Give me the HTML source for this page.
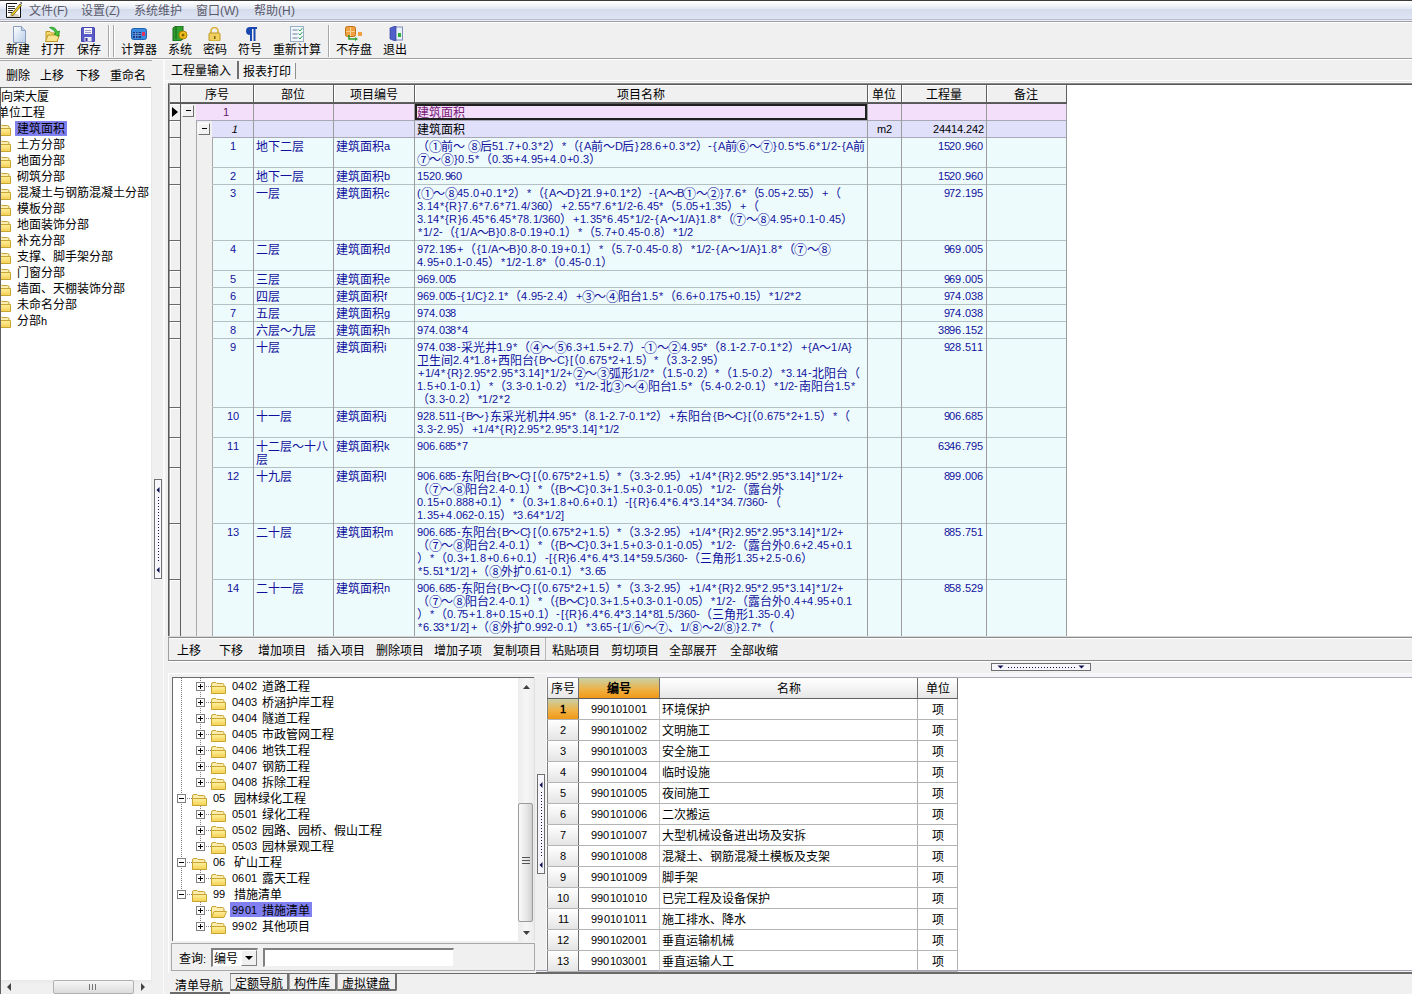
<!DOCTYPE html>
<html lang="zh-CN"><head><meta charset="utf-8">
<style>
@font-face{font-family:"Liberation Sans";src:local("Liberation Sans"),local("LiberationSans");size-adjust:91.67%;unicode-range:U+0000-024F}
*{box-sizing:border-box}
html,body{margin:0;padding:0}
body{width:1412px;height:994px;overflow:hidden;position:relative;background:#f0f0f0;font-family:"Liberation Sans",sans-serif;font-size:12px;color:#000;line-height:13px}
.a{position:absolute}
.l{position:relative;top:-1px}
.nw{white-space:nowrap}
.b{color:#10109c}
</style></head><body>

<div class="a" style="left:0px;top:0px;width:1412px;height:1px;background:#3c3c3c"></div>
<div class="a" style="left:0px;top:1px;width:1412px;height:2px;background:#ffffff"></div>
<div class="a" style="left:0px;top:3px;width:1412px;height:6px;background:linear-gradient(#fafbfd,#e4eaf4)"></div>
<div class="a" style="left:0px;top:9px;width:1412px;height:10px;background:linear-gradient(#d4dcec,#dee4f4)"></div>
<div class="a" style="left:0px;top:19px;width:1412px;height:1px;background:#b8bccc"></div>
<div class="a" style="left:0px;top:20px;width:1412px;height:1px;background:#eceef4"></div>
<div class="a" style="left:0px;top:21px;width:1412px;height:1px;background:#9c9ca4"></div>
<div class="a" style="left:0px;top:22px;width:1412px;height:1px;background:#ffffff"></div>
<svg class="a" style="left:6px;top:2px" width="16" height="16" viewBox="0 0 16 16">
<path d="M0.5 1.5V15.5H14.5V3" fill="#fff" stroke="#111" stroke-width="1"/>
<path d="M0.5 1.5H11" stroke="#111" stroke-width="1"/>
<path d="M2 4.5h7M2 6.5h7M2 8.5h5M2 10.5h4" stroke="#333" stroke-width="1" fill="none"/>
<path d="M1 15 L6 12 L12 12 L14 15z" fill="#d8d0c0"/>
<path d="M5 12.5 L14 2 L15.5 3.5 L6.5 14 Z" fill="#f0d020" stroke="#504010" stroke-width="0.7"/>
<path d="M14 0.5 L15.8 0.3 L15.5 2.5z" fill="#111"/>
</svg>
<div class="a nw " style="left:29px;top:3px;color:#5a5a6a;font-size:12px;line-height:16px">文件<span style="font-size:13.5px">(F)</span></div>
<div class="a nw " style="left:81px;top:3px;color:#5a5a6a;font-size:12px;line-height:16px">设置<span style="font-size:13.5px">(Z)</span></div>
<div class="a nw " style="left:134px;top:3px;color:#5a5a6a;font-size:12px;line-height:16px">系统维护</div>
<div class="a nw " style="left:196px;top:3px;color:#5a5a6a;font-size:12px;line-height:16px">窗口<span style="font-size:13.5px">(W)</span></div>
<div class="a nw " style="left:254px;top:3px;color:#5a5a6a;font-size:12px;line-height:16px">帮助<span style="font-size:13.5px">(H)</span></div>
<div class="a" style="left:0px;top:58px;width:1412px;height:1px;background:#a0a0a0"></div>
<div class="a" style="left:0px;top:59px;width:1412px;height:1px;background:#ffffff"></div>
<div class="a" style="left:108px;top:25px;width:1px;height:32px;background:#a8a8a8"></div>
<div class="a" style="left:109px;top:25px;width:1px;height:32px;background:#fff"></div>
<div class="a" style="left:113px;top:25px;width:1px;height:32px;background:#a8a8a8"></div>
<div class="a" style="left:114px;top:25px;width:1px;height:32px;background:#fff"></div>
<div class="a" style="left:328px;top:25px;width:1px;height:32px;background:#a8a8a8"></div>
<div class="a" style="left:329px;top:25px;width:1px;height:32px;background:#fff"></div>
<div class="a nw " style="left:6px;top:43px;font-size:12px;line-height:14px;color:#000">新建</div>
<div class="a nw " style="left:41px;top:43px;font-size:12px;line-height:14px;color:#000">打开</div>
<div class="a nw " style="left:77px;top:43px;font-size:12px;line-height:14px;color:#000">保存</div>
<div class="a nw " style="left:121px;top:43px;font-size:12px;line-height:14px;color:#000">计算器</div>
<div class="a nw " style="left:168px;top:43px;font-size:12px;line-height:14px;color:#000">系统</div>
<div class="a nw " style="left:203px;top:43px;font-size:12px;line-height:14px;color:#000">密码</div>
<div class="a nw " style="left:238px;top:43px;font-size:12px;line-height:14px;color:#000">符号</div>
<div class="a nw " style="left:273px;top:43px;font-size:12px;line-height:14px;color:#000">重新计算</div>
<div class="a nw " style="left:336px;top:43px;font-size:12px;line-height:14px;color:#000">不存盘</div>
<div class="a nw " style="left:383px;top:43px;font-size:12px;line-height:14px;color:#000">退出</div>
<div class="a" style="left:12px;top:26px;line-height:0"><svg width="15" height="17" viewBox="0 0 15 17"><path d="M1.5 0.5h8l4 4v12h-12z" fill="url(#gn)" stroke="#8aa0c0"/><path d="M9.5 0.5v4h4" fill="#c8d4e8" stroke="#8aa0c0"/><defs><linearGradient id="gn" x1="0" y1="0" x2="1" y2="1"><stop offset="0" stop-color="#ffffff"/><stop offset="1" stop-color="#b8cce8"/></linearGradient></defs></svg></div>
<div class="a" style="left:45px;top:26px;line-height:0"><svg width="17" height="16" viewBox="0 0 17 16"><path d="M1 5.5h4l1.5 1.5h6v8.5h-11.5z" fill="#f4d868" stroke="#c09828"/><path d="M0.5 15.5l2.5-6.5h11.5l-2.5 6.5z" fill="#f8e490" stroke="#c09828"/><path d="M4.5 1.5 Q10 0 12.5 6 L14.5 5 L13.5 10.5 L9 8 L11 7 Q9 3.5 4.5 1.5z" fill="#48c838" stroke="#209020" stroke-width="0.8"/></svg></div>
<div class="a" style="left:81px;top:27px;line-height:0"><svg width="14" height="15" viewBox="0 0 14 15"><path d="M1 0.5h12l0.5 0.5v13.5h-13v-13.5z" fill="#5a5ac8" stroke="#4848b0"/><rect x="3" y="1" width="8" height="6" fill="#f4f4fc"/><path d="M4 3.5h6M4 5.5h6" stroke="#9898c8"/><rect x="3.5" y="10" width="7" height="4.5" fill="#ececf8"/><rect x="4.5" y="11" width="2" height="3" fill="#303090"/></svg></div>
<div class="a" style="left:131px;top:28px;line-height:0"><svg width="16" height="12" viewBox="0 0 16 12"><rect x="0.5" y="0.5" width="15" height="11" rx="2" fill="#3a8ae0" stroke="#2060b0"/><rect x="2" y="4" width="8" height="6" fill="#1a3a80"/><path d="M2 5.5h8M2 7.5h8M4.5 4v6M7 4v6" stroke="#6aa0e8" stroke-width="0.8"/><rect x="11" y="4" width="3" height="4" fill="#e03060"/></svg></div>
<div class="a" style="left:172px;top:26px;line-height:0"><svg width="16" height="15" viewBox="0 0 16 15"><path d="M1 2l3-2h7v13l-3 2h-7z" fill="#30a030" stroke="#186018"/><path d="M4 0v13" stroke="#186018"/><circle cx="11" cy="9" r="4" fill="#f0c020" stroke="#b08000"/><circle cx="11" cy="9" r="1.5" fill="#806000"/></svg></div>
<div class="a" style="left:208px;top:27px;line-height:0"><svg width="13" height="14" viewBox="0 0 13 14"><path d="M3 6V4a3.5 3.5 0 0 1 7 0v2" fill="none" stroke="#d8b030" stroke-width="1.6"/><rect x="1" y="6" width="11" height="8" rx="1" fill="#f0d060" stroke="#c09820"/><rect x="6" y="9" width="1.5" height="3" fill="#806000"/></svg></div>
<div class="a" style="left:244px;top:27px;line-height:0"><svg width="13" height="14" viewBox="0 0 13 14"><path d="M6 0h7v2h-1.5v12h-2v-12h-1.5v12h-2v-6a4 4 0 0 1 0-8z" fill="#1848b0"/></svg></div>
<div class="a" style="left:290px;top:26px;line-height:0"><svg width="14" height="16" viewBox="0 0 14 16"><rect x="0.5" y="0.5" width="13" height="15" fill="#f4f8fc" stroke="#98b0c8"/><path d="M2.5 4h5M2.5 8h5M2.5 12h5" stroke="#6080a0"/><path d="M8.5 3.5l1.5 1.5 2.5-3M8.5 7.5l1.5 1.5 2.5-3M8.5 11.5l1.5 1.5 2.5-3" stroke="#30a050" fill="none"/></svg></div>
<div class="a" style="left:345px;top:26px;line-height:0"><svg width="18" height="16" viewBox="0 0 18 16"><rect x="0.5" y="0.5" width="10" height="10" rx="2" fill="#f0a040" stroke="#c07010"/><path d="M5.5 1v9M1 5.5h9" stroke="#f8d090"/><rect x="13" y="6" width="4" height="4" fill="#f0a040"/><path d="M4 9v4h7" stroke="#30a030" stroke-width="1.6" fill="none"/><path d="M10 11l3 2-3 2z" fill="#30a030"/></svg></div>
<div class="a" style="left:389px;top:26px;line-height:0"><svg width="14" height="15" viewBox="0 0 14 15"><rect x="4" y="1" width="9.5" height="13" fill="#e8f0f8" stroke="#8090c0"/><path d="M1 2l6-2v15l-6-2z" fill="#5060c8" stroke="#3040a0" stroke-width="0.7"/><rect x="9" y="7" width="3" height="4" fill="#30b030"/></svg></div>
<div class="a nw " style="left:6px;top:69px;line-height:14px">删除</div>
<div class="a nw " style="left:40px;top:69px;line-height:14px">上移</div>
<div class="a nw " style="left:76px;top:69px;line-height:14px">下移</div>
<div class="a nw " style="left:110px;top:69px;line-height:14px">重命名</div>
<div class="a" style="left:0px;top:60px;width:152px;height:1px;background:#a8a8a8"></div>
<div class="a" style="left:0px;top:87px;width:152px;height:907px;background:#fff"></div>
<div class="a" style="left:0px;top:87px;width:152px;height:1px;background:#707070"></div>
<div class="a" style="left:151px;top:86px;width:1px;height:894px;background:#e8e8e8"></div>
<div class="a nw " style="left:1px;top:90px;line-height:14px">向荣大厦</div>
<div class="a nw " style="left:-3px;top:106px;line-height:14px">单位工程</div>
<div class="a" style="left:-4px;top:124px;line-height:0"><svg width="15" height="12" viewBox="0 0 15 12"><path d="M0.5 11.5V2Q0.5 0.5 2 0.5H5L6 1.5H11.5Q13 1.5 13 3V11.5z" fill="#fbeeb0" stroke="#c8a430"/><path d="M0.5 4.5H14.5V11.5H0.5z" fill="url(#fg)" stroke="#c8a430"/><defs><linearGradient id="fg" x1="0" y1="0" x2="0" y2="1"><stop offset="0" stop-color="#fff0a0"/><stop offset="1" stop-color="#f4d050"/></linearGradient></defs></svg></div>
<div class="a" style="left:15px;top:121px;width:52px;height:15px;background:#8080f0"></div>
<div class="a nw " style="left:17px;top:122px;line-height:14px">建筑面积</div>
<div class="a" style="left:-4px;top:140px;line-height:0"><svg width="15" height="12" viewBox="0 0 15 12"><path d="M0.5 11.5V2Q0.5 0.5 2 0.5H5L6 1.5H11.5Q13 1.5 13 3V11.5z" fill="#fbeeb0" stroke="#c8a430"/><path d="M0.5 4.5H14.5V11.5H0.5z" fill="url(#fg)" stroke="#c8a430"/><defs><linearGradient id="fg" x1="0" y1="0" x2="0" y2="1"><stop offset="0" stop-color="#fff0a0"/><stop offset="1" stop-color="#f4d050"/></linearGradient></defs></svg></div>
<div class="a nw " style="left:17px;top:138px;line-height:14px">土方分部</div>
<div class="a" style="left:-4px;top:156px;line-height:0"><svg width="15" height="12" viewBox="0 0 15 12"><path d="M0.5 11.5V2Q0.5 0.5 2 0.5H5L6 1.5H11.5Q13 1.5 13 3V11.5z" fill="#fbeeb0" stroke="#c8a430"/><path d="M0.5 4.5H14.5V11.5H0.5z" fill="url(#fg)" stroke="#c8a430"/><defs><linearGradient id="fg" x1="0" y1="0" x2="0" y2="1"><stop offset="0" stop-color="#fff0a0"/><stop offset="1" stop-color="#f4d050"/></linearGradient></defs></svg></div>
<div class="a nw " style="left:17px;top:154px;line-height:14px">地面分部</div>
<div class="a" style="left:-4px;top:172px;line-height:0"><svg width="15" height="12" viewBox="0 0 15 12"><path d="M0.5 11.5V2Q0.5 0.5 2 0.5H5L6 1.5H11.5Q13 1.5 13 3V11.5z" fill="#fbeeb0" stroke="#c8a430"/><path d="M0.5 4.5H14.5V11.5H0.5z" fill="url(#fg)" stroke="#c8a430"/><defs><linearGradient id="fg" x1="0" y1="0" x2="0" y2="1"><stop offset="0" stop-color="#fff0a0"/><stop offset="1" stop-color="#f4d050"/></linearGradient></defs></svg></div>
<div class="a nw " style="left:17px;top:170px;line-height:14px">砌筑分部</div>
<div class="a" style="left:-4px;top:188px;line-height:0"><svg width="15" height="12" viewBox="0 0 15 12"><path d="M0.5 11.5V2Q0.5 0.5 2 0.5H5L6 1.5H11.5Q13 1.5 13 3V11.5z" fill="#fbeeb0" stroke="#c8a430"/><path d="M0.5 4.5H14.5V11.5H0.5z" fill="url(#fg)" stroke="#c8a430"/><defs><linearGradient id="fg" x1="0" y1="0" x2="0" y2="1"><stop offset="0" stop-color="#fff0a0"/><stop offset="1" stop-color="#f4d050"/></linearGradient></defs></svg></div>
<div class="a nw " style="left:17px;top:186px;line-height:14px">混凝土与钢筋混凝土分部</div>
<div class="a" style="left:-4px;top:204px;line-height:0"><svg width="15" height="12" viewBox="0 0 15 12"><path d="M0.5 11.5V2Q0.5 0.5 2 0.5H5L6 1.5H11.5Q13 1.5 13 3V11.5z" fill="#fbeeb0" stroke="#c8a430"/><path d="M0.5 4.5H14.5V11.5H0.5z" fill="url(#fg)" stroke="#c8a430"/><defs><linearGradient id="fg" x1="0" y1="0" x2="0" y2="1"><stop offset="0" stop-color="#fff0a0"/><stop offset="1" stop-color="#f4d050"/></linearGradient></defs></svg></div>
<div class="a nw " style="left:17px;top:202px;line-height:14px">模板分部</div>
<div class="a" style="left:-4px;top:220px;line-height:0"><svg width="15" height="12" viewBox="0 0 15 12"><path d="M0.5 11.5V2Q0.5 0.5 2 0.5H5L6 1.5H11.5Q13 1.5 13 3V11.5z" fill="#fbeeb0" stroke="#c8a430"/><path d="M0.5 4.5H14.5V11.5H0.5z" fill="url(#fg)" stroke="#c8a430"/><defs><linearGradient id="fg" x1="0" y1="0" x2="0" y2="1"><stop offset="0" stop-color="#fff0a0"/><stop offset="1" stop-color="#f4d050"/></linearGradient></defs></svg></div>
<div class="a nw " style="left:17px;top:218px;line-height:14px">地面装饰分部</div>
<div class="a" style="left:-4px;top:236px;line-height:0"><svg width="15" height="12" viewBox="0 0 15 12"><path d="M0.5 11.5V2Q0.5 0.5 2 0.5H5L6 1.5H11.5Q13 1.5 13 3V11.5z" fill="#fbeeb0" stroke="#c8a430"/><path d="M0.5 4.5H14.5V11.5H0.5z" fill="url(#fg)" stroke="#c8a430"/><defs><linearGradient id="fg" x1="0" y1="0" x2="0" y2="1"><stop offset="0" stop-color="#fff0a0"/><stop offset="1" stop-color="#f4d050"/></linearGradient></defs></svg></div>
<div class="a nw " style="left:17px;top:234px;line-height:14px">补充分部</div>
<div class="a" style="left:-4px;top:252px;line-height:0"><svg width="15" height="12" viewBox="0 0 15 12"><path d="M0.5 11.5V2Q0.5 0.5 2 0.5H5L6 1.5H11.5Q13 1.5 13 3V11.5z" fill="#fbeeb0" stroke="#c8a430"/><path d="M0.5 4.5H14.5V11.5H0.5z" fill="url(#fg)" stroke="#c8a430"/><defs><linearGradient id="fg" x1="0" y1="0" x2="0" y2="1"><stop offset="0" stop-color="#fff0a0"/><stop offset="1" stop-color="#f4d050"/></linearGradient></defs></svg></div>
<div class="a nw " style="left:17px;top:250px;line-height:14px">支撑、脚手架分部</div>
<div class="a" style="left:-4px;top:268px;line-height:0"><svg width="15" height="12" viewBox="0 0 15 12"><path d="M0.5 11.5V2Q0.5 0.5 2 0.5H5L6 1.5H11.5Q13 1.5 13 3V11.5z" fill="#fbeeb0" stroke="#c8a430"/><path d="M0.5 4.5H14.5V11.5H0.5z" fill="url(#fg)" stroke="#c8a430"/><defs><linearGradient id="fg" x1="0" y1="0" x2="0" y2="1"><stop offset="0" stop-color="#fff0a0"/><stop offset="1" stop-color="#f4d050"/></linearGradient></defs></svg></div>
<div class="a nw " style="left:17px;top:266px;line-height:14px">门窗分部</div>
<div class="a" style="left:-4px;top:284px;line-height:0"><svg width="15" height="12" viewBox="0 0 15 12"><path d="M0.5 11.5V2Q0.5 0.5 2 0.5H5L6 1.5H11.5Q13 1.5 13 3V11.5z" fill="#fbeeb0" stroke="#c8a430"/><path d="M0.5 4.5H14.5V11.5H0.5z" fill="url(#fg)" stroke="#c8a430"/><defs><linearGradient id="fg" x1="0" y1="0" x2="0" y2="1"><stop offset="0" stop-color="#fff0a0"/><stop offset="1" stop-color="#f4d050"/></linearGradient></defs></svg></div>
<div class="a nw " style="left:17px;top:282px;line-height:14px">墙面、天棚装饰分部</div>
<div class="a" style="left:-4px;top:300px;line-height:0"><svg width="15" height="12" viewBox="0 0 15 12"><path d="M0.5 11.5V2Q0.5 0.5 2 0.5H5L6 1.5H11.5Q13 1.5 13 3V11.5z" fill="#fbeeb0" stroke="#c8a430"/><path d="M0.5 4.5H14.5V11.5H0.5z" fill="url(#fg)" stroke="#c8a430"/><defs><linearGradient id="fg" x1="0" y1="0" x2="0" y2="1"><stop offset="0" stop-color="#fff0a0"/><stop offset="1" stop-color="#f4d050"/></linearGradient></defs></svg></div>
<div class="a nw " style="left:17px;top:298px;line-height:14px">未命名分部</div>
<div class="a" style="left:-4px;top:316px;line-height:0"><svg width="15" height="12" viewBox="0 0 15 12"><path d="M0.5 11.5V2Q0.5 0.5 2 0.5H5L6 1.5H11.5Q13 1.5 13 3V11.5z" fill="#fbeeb0" stroke="#c8a430"/><path d="M0.5 4.5H14.5V11.5H0.5z" fill="url(#fg)" stroke="#c8a430"/><defs><linearGradient id="fg" x1="0" y1="0" x2="0" y2="1"><stop offset="0" stop-color="#fff0a0"/><stop offset="1" stop-color="#f4d050"/></linearGradient></defs></svg></div>
<div class="a nw " style="left:17px;top:314px;line-height:14px">分部h</div>
<div class="a" style="left:0px;top:87px;width:1px;height:907px;background:#606060"></div>
<div class="a" style="left:1px;top:980px;width:151px;height:14px;background:linear-gradient(#e8e8e8,#f0f0f0 30%,#f0f0f0)"></div>
<div class="a" style="left:53px;top:980px;width:81px;height:14px;background:linear-gradient(#f6f6f6,#dcdcdc);border:1px solid #b0b0b0;border-radius:2px"></div>
<div class="a" style="left:89px;top:984px;width:7px;height:6px;border-left:1px solid #777;border-right:1px solid #777"></div>
<div class="a" style="left:92px;top:984px;width:1px;height:6px;background:#777"></div>
<svg class="a" style="left:7px;top:983px" width="5" height="8"><path d="M4 0L0 4L4 8z" fill="#444"/></svg>
<svg class="a" style="left:141px;top:983px" width="5" height="8"><path d="M0 0L4 4L0 8z" fill="#444"/></svg>
<div class="a" style="left:154px;top:479px;width:8px;height:100px;background:#f6f6fc;border:1px solid #707070"></div>
<svg class="a" style="left:155px;top:485px" width="6" height="90"><path d="M4.5 2L1.5 5L4.5 8z" fill="#101050"/><path d="M4.5 82L1.5 85L4.5 88z" fill="#101050"/><path d="M3.5 12V78" stroke="#101040" stroke-width="1" stroke-dasharray="1 2"/></svg>
<div class="a" style="left:163px;top:60px;width:1px;height:934px;background:#fafafa"></div>
<div class="a" style="left:164px;top:60px;width:1px;height:576px;background:#fcfcfc"></div>
<div class="a nw " style="left:171px;top:64px;line-height:14px">工程量输入</div>
<div class="a" style="left:237px;top:61px;width:2px;height:18px;background:#707070"></div>
<div class="a" style="left:239px;top:62px;width:56px;height:17px;background:#f4f4f4"></div>
<div class="a nw " style="left:243px;top:65px;line-height:14px">报表打印</div>
<div class="a" style="left:295px;top:63px;width:1px;height:16px;background:#909090"></div>
<div class="a" style="left:165px;top:80px;width:1247px;height:1px;background:#fff"></div>
<div class="a" style="left:180px;top:81px;width:1232px;height:1px;background:#e8e8e8"></div>
<div class="a" style="left:165px;top:82px;width:1247px;height:1px;background:#f8f8f8"></div>
<div class="a" style="left:168px;top:84px;width:1244px;height:553px;background:#fff"></div>
<div class="a" style="left:168px;top:83px;width:1244px;height:1px;background:#8a8a8a"></div>
<div class="a" style="left:168px;top:84px;width:1244px;height:1px;background:#5a5a5a"></div>
<div class="a" style="left:169px;top:85px;width:897px;height:17px;background:#f0f0f0"></div>
<div class="a" style="left:169px;top:85px;width:11px;height:17px;background:#f0f0f0;border-left:1px solid #fff;border-top:1px solid #fff"></div>
<div class="a nw" style="left:181px;top:85px;width:72px;height:17px;border-left:1px solid #fff;border-top:1px solid #fff;text-align:center;line-height:18px;padding-right:2px">序号</div>
<div class="a nw" style="left:254px;top:85px;width:79px;height:17px;border-left:1px solid #fff;border-top:1px solid #fff;text-align:center;line-height:18px;padding-right:2px">部位</div>
<div class="a nw" style="left:334px;top:85px;width:80px;height:17px;border-left:1px solid #fff;border-top:1px solid #fff;text-align:center;line-height:18px;padding-right:2px">项目编号</div>
<div class="a nw" style="left:415px;top:85px;width:452px;height:17px;border-left:1px solid #fff;border-top:1px solid #fff;text-align:center;line-height:18px;padding-right:2px">项目名称</div>
<div class="a nw" style="left:868px;top:85px;width:33px;height:17px;border-left:1px solid #fff;border-top:1px solid #fff;text-align:center;line-height:18px;padding-right:2px">单位</div>
<div class="a nw" style="left:902px;top:85px;width:84px;height:17px;border-left:1px solid #fff;border-top:1px solid #fff;text-align:center;line-height:18px;padding-right:2px">工程量</div>
<div class="a nw" style="left:987px;top:85px;width:79px;height:17px;border-left:1px solid #fff;border-top:1px solid #fff;text-align:center;line-height:18px;padding-right:2px">备注</div>
<div class="a" style="left:180px;top:84px;width:1px;height:19px;background:#606060"></div>
<div class="a" style="left:253px;top:84px;width:1px;height:19px;background:#606060"></div>
<div class="a" style="left:333px;top:84px;width:1px;height:19px;background:#606060"></div>
<div class="a" style="left:414px;top:84px;width:1px;height:19px;background:#606060"></div>
<div class="a" style="left:867px;top:84px;width:1px;height:19px;background:#606060"></div>
<div class="a" style="left:901px;top:84px;width:1px;height:19px;background:#606060"></div>
<div class="a" style="left:986px;top:84px;width:1px;height:19px;background:#606060"></div>
<div class="a" style="left:1066px;top:84px;width:1px;height:19px;background:#606060"></div>
<div class="a" style="left:168px;top:102px;width:899px;height:1px;background:#606060"></div>
<div class="a" style="left:168px;top:103px;width:899px;height:1px;background:#585858"></div>
<div class="a" style="left:168px;top:84px;width:1px;height:552px;background:#5a5a5a"></div>
<div class="a" style="left:169px;top:84px;width:1px;height:552px;background:#9a9a9a"></div>
<div class="a" style="left:170px;top:104px;width:10px;height:16px;background:#f0f0f0;border-left:1px solid #fff;border-top:1px solid #fff"></div>
<div class="a" style="left:169px;top:120px;width:12px;height:1px;background:#6a6a6a"></div>
<div class="a" style="left:170px;top:121px;width:10px;height:16px;background:#f0f0f0;border-left:1px solid #fff;border-top:1px solid #fff"></div>
<div class="a" style="left:169px;top:137px;width:12px;height:1px;background:#6a6a6a"></div>
<div class="a" style="left:170px;top:138px;width:10px;height:29px;background:#f0f0f0;border-left:1px solid #fff;border-top:1px solid #fff"></div>
<div class="a" style="left:169px;top:167px;width:12px;height:1px;background:#6a6a6a"></div>
<div class="a" style="left:170px;top:168px;width:10px;height:16px;background:#f0f0f0;border-left:1px solid #fff;border-top:1px solid #fff"></div>
<div class="a" style="left:169px;top:184px;width:12px;height:1px;background:#6a6a6a"></div>
<div class="a" style="left:170px;top:185px;width:10px;height:55px;background:#f0f0f0;border-left:1px solid #fff;border-top:1px solid #fff"></div>
<div class="a" style="left:169px;top:240px;width:12px;height:1px;background:#6a6a6a"></div>
<div class="a" style="left:170px;top:241px;width:10px;height:29px;background:#f0f0f0;border-left:1px solid #fff;border-top:1px solid #fff"></div>
<div class="a" style="left:169px;top:270px;width:12px;height:1px;background:#6a6a6a"></div>
<div class="a" style="left:170px;top:271px;width:10px;height:16px;background:#f0f0f0;border-left:1px solid #fff;border-top:1px solid #fff"></div>
<div class="a" style="left:169px;top:287px;width:12px;height:1px;background:#6a6a6a"></div>
<div class="a" style="left:170px;top:288px;width:10px;height:16px;background:#f0f0f0;border-left:1px solid #fff;border-top:1px solid #fff"></div>
<div class="a" style="left:169px;top:304px;width:12px;height:1px;background:#6a6a6a"></div>
<div class="a" style="left:170px;top:305px;width:10px;height:16px;background:#f0f0f0;border-left:1px solid #fff;border-top:1px solid #fff"></div>
<div class="a" style="left:169px;top:321px;width:12px;height:1px;background:#6a6a6a"></div>
<div class="a" style="left:170px;top:322px;width:10px;height:16px;background:#f0f0f0;border-left:1px solid #fff;border-top:1px solid #fff"></div>
<div class="a" style="left:169px;top:338px;width:12px;height:1px;background:#6a6a6a"></div>
<div class="a" style="left:170px;top:339px;width:10px;height:68px;background:#f0f0f0;border-left:1px solid #fff;border-top:1px solid #fff"></div>
<div class="a" style="left:169px;top:407px;width:12px;height:1px;background:#6a6a6a"></div>
<div class="a" style="left:170px;top:408px;width:10px;height:29px;background:#f0f0f0;border-left:1px solid #fff;border-top:1px solid #fff"></div>
<div class="a" style="left:169px;top:437px;width:12px;height:1px;background:#6a6a6a"></div>
<div class="a" style="left:170px;top:438px;width:10px;height:29px;background:#f0f0f0;border-left:1px solid #fff;border-top:1px solid #fff"></div>
<div class="a" style="left:169px;top:467px;width:12px;height:1px;background:#6a6a6a"></div>
<div class="a" style="left:170px;top:468px;width:10px;height:55px;background:#f0f0f0;border-left:1px solid #fff;border-top:1px solid #fff"></div>
<div class="a" style="left:169px;top:523px;width:12px;height:1px;background:#6a6a6a"></div>
<div class="a" style="left:170px;top:524px;width:10px;height:55px;background:#f0f0f0;border-left:1px solid #fff;border-top:1px solid #fff"></div>
<div class="a" style="left:169px;top:579px;width:12px;height:1px;background:#6a6a6a"></div>
<div class="a" style="left:170px;top:580px;width:10px;height:56px;background:#f0f0f0;border-left:1px solid #fff;border-top:1px solid #fff"></div>
<div class="a" style="left:169px;top:636px;width:12px;height:1px;background:#6a6a6a"></div>
<div class="a" style="left:180px;top:84px;width:1px;height:552px;background:#5e5e5e"></div>
<svg class="a" style="left:172px;top:107px" width="6" height="10"><path d="M0 0L6 5L0 10z" fill="#000"/></svg>
<div class="a" style="left:181px;top:104px;width:31px;height:532px;background:#f0f0f0"></div>
<div class="a" style="left:196px;top:121px;width:1px;height:515px;background:#a8a8a8"></div>
<div class="a" style="left:212px;top:138px;width:1px;height:498px;background:#a8a8a8"></div>
<div class="a" style="left:182px;top:105px;width:12px;height:12px;background:#f2f2f2;border-top:1px solid #fff;border-left:1px solid #fff;border-right:1px solid #707070;border-bottom:1px solid #707070"></div>
<div class="a" style="left:186px;top:110px;width:5px;height:1px;background:#000"></div>
<div class="a" style="left:198px;top:123px;width:12px;height:12px;background:#f2f2f2;border-top:1px solid #fff;border-left:1px solid #fff;border-right:1px solid #707070;border-bottom:1px solid #707070"></div>
<div class="a" style="left:202px;top:128px;width:5px;height:1px;background:#000"></div>
<div class="a" style="left:196px;top:104px;width:871px;height:16px;background:#f3dff9"></div>
<div class="a" style="left:212px;top:121px;width:855px;height:16px;background:#e0e0fa"></div>
<div class="a" style="left:213px;top:138px;width:854px;height:498px;background:#eefbfc"></div>
<div class="a" style="left:196px;top:120px;width:871px;height:1px;background:#a8a8b8"></div>
<div class="a" style="left:212px;top:137px;width:855px;height:1px;background:#a8a8b8"></div>
<div class="a" style="left:212px;top:167px;width:855px;height:1px;background:#b4c0c4"></div>
<div class="a" style="left:212px;top:184px;width:855px;height:1px;background:#b4c0c4"></div>
<div class="a" style="left:212px;top:240px;width:855px;height:1px;background:#b4c0c4"></div>
<div class="a" style="left:212px;top:270px;width:855px;height:1px;background:#b4c0c4"></div>
<div class="a" style="left:212px;top:287px;width:855px;height:1px;background:#b4c0c4"></div>
<div class="a" style="left:212px;top:304px;width:855px;height:1px;background:#b4c0c4"></div>
<div class="a" style="left:212px;top:321px;width:855px;height:1px;background:#b4c0c4"></div>
<div class="a" style="left:212px;top:338px;width:855px;height:1px;background:#b4c0c4"></div>
<div class="a" style="left:212px;top:407px;width:855px;height:1px;background:#b4c0c4"></div>
<div class="a" style="left:212px;top:437px;width:855px;height:1px;background:#b4c0c4"></div>
<div class="a" style="left:212px;top:467px;width:855px;height:1px;background:#b4c0c4"></div>
<div class="a" style="left:212px;top:523px;width:855px;height:1px;background:#b4c0c4"></div>
<div class="a" style="left:212px;top:579px;width:855px;height:1px;background:#b4c0c4"></div>
<div class="a" style="left:212px;top:636px;width:855px;height:1px;background:#b4c0c4"></div>
<div class="a" style="left:253px;top:104px;width:1px;height:532px;background:#9c9c9c"></div>
<div class="a" style="left:333px;top:104px;width:1px;height:532px;background:#9c9c9c"></div>
<div class="a" style="left:414px;top:104px;width:1px;height:532px;background:#9c9c9c"></div>
<div class="a" style="left:867px;top:104px;width:1px;height:532px;background:#9c9c9c"></div>
<div class="a" style="left:901px;top:104px;width:1px;height:532px;background:#9c9c9c"></div>
<div class="a" style="left:986px;top:104px;width:1px;height:532px;background:#9c9c9c"></div>
<div class="a" style="left:1066px;top:104px;width:1px;height:532px;background:#9c9c9c"></div>
<div class="a" style="left:415px;top:104px;width:452px;height:16px;border:2px solid #202020;background:#f3dff9"></div>
<div class="a nw " style="left:417px;top:106px;color:#7a1a7a;line-height:14px">建筑面积</div>
<div class="a nw " style="left:223px;top:105px;color:#6a186a;line-height:14px">1</div>
<div class="a nw " style="left:231px;top:122px;color:#000;line-height:14px"><i>1</i></div>
<div class="a nw " style="left:417px;top:123px;line-height:14px">建筑面积</div>
<div class="a nw " style="left:877px;top:122px;line-height:14px">m2</div>
<div class="a nw" style="left:902px;top:122px;width:82px;text-align:right;line-height:14px">24414.242</div>
<div class="a nw b" style="left:213px;top:141px;width:40px;text-align:center;line-height:13px"><span class="l"><span style="margin:0 -0.06px">1</span></span></div>
<div class="a nw b" style="left:256px;top:141px;line-height:13px">地下二层</div>
<div class="a nw b" style="left:336px;top:141px;line-height:13px">建筑面积<span class="l">a</span></div>
<div class="a nw b" style="left:417px;top:141px;line-height:13px">（<span style="font-size:13px;margin:0 -0.5px;line-height:13px">①</span>前～<span class="l"><span style="margin:0 0.20px"> </span></span><span style="font-size:13px;margin:0 -0.5px;line-height:13px">⑧</span>后<span class="l"><span style="margin:0 -0.06px">5</span><span style="margin:0 -0.06px">1</span><span style="margin:0 0.47px">.</span><span style="margin:0 -0.06px">7</span><span style="margin:0 0.79px">+</span><span style="margin:0 -0.06px">0</span><span style="margin:0 0.47px">.</span><span style="margin:0 -0.06px">3</span><span style="margin:0 0.86px">*</span><span style="margin:0 -0.06px">2</span></span>）<span class="l"><span style="margin:0 0.86px">*</span></span>（<span class="l"><span style="margin:0 0.67px">{</span><span style="margin:0 -0.17px">A</span></span>前～<span class="l"><span style="margin:0 -0.17px">D</span></span>后<span class="l"><span style="margin:0 0.67px">}</span><span style="margin:0 -0.06px">2</span><span style="margin:0 -0.06px">8</span><span style="margin:0 0.47px">.</span><span style="margin:0 -0.06px">6</span><span style="margin:0 0.79px">+</span><span style="margin:0 -0.06px">0</span><span style="margin:0 0.47px">.</span><span style="margin:0 -0.06px">3</span><span style="margin:0 0.86px">*</span><span style="margin:0 -0.06px">2</span></span>）<span class="l"><span style="margin:0 0.17px">-</span><span style="margin:0 0.67px">{</span><span style="margin:0 -0.17px">A</span></span>前<span style="font-size:13px;margin:0 -0.5px;line-height:13px">⑥</span>～<span style="font-size:13px;margin:0 -0.5px;line-height:13px">⑦</span><span class="l"><span style="margin:0 0.67px">}</span><span style="margin:0 -0.06px">0</span><span style="margin:0 0.47px">.</span><span style="margin:0 -0.06px">5</span><span style="margin:0 0.86px">*</span><span style="margin:0 -0.06px">5</span><span style="margin:0 0.47px">.</span><span style="margin:0 -0.06px">6</span><span style="margin:0 0.86px">*</span><span style="margin:0 -0.06px">1</span><span style="margin:0 0.47px">/</span><span style="margin:0 -0.06px">2</span><span style="margin:0 0.17px">-</span><span style="margin:0 0.67px">{</span><span style="margin:0 -0.17px">A</span></span>前<br><span style="font-size:13px;margin:0 -0.5px;line-height:13px">⑦</span>～<span style="font-size:13px;margin:0 -0.5px;line-height:13px">⑧</span><span class="l"><span style="margin:0 0.67px">}</span><span style="margin:0 -0.06px">0</span><span style="margin:0 0.47px">.</span><span style="margin:0 -0.06px">5</span><span style="margin:0 0.86px">*</span></span>（<span class="l"><span style="margin:0 -0.06px">0</span><span style="margin:0 0.47px">.</span><span style="margin:0 -0.06px">3</span><span style="margin:0 -0.06px">5</span><span style="margin:0 0.79px">+</span><span style="margin:0 -0.06px">4</span><span style="margin:0 0.47px">.</span><span style="margin:0 -0.06px">9</span><span style="margin:0 -0.06px">5</span><span style="margin:0 0.79px">+</span><span style="margin:0 -0.06px">4</span><span style="margin:0 0.47px">.</span><span style="margin:0 -0.06px">0</span><span style="margin:0 0.79px">+</span><span style="margin:0 -0.06px">0</span><span style="margin:0 0.47px">.</span><span style="margin:0 -0.06px">3</span></span>）</div>
<div class="a nw b" style="left:901px;top:141px;width:82px;text-align:right;line-height:13px"><span class="l"><span style="margin:0 -0.06px">1</span><span style="margin:0 -0.06px">5</span><span style="margin:0 -0.06px">2</span><span style="margin:0 -0.06px">0</span><span style="margin:0 0.47px">.</span><span style="margin:0 -0.06px">9</span><span style="margin:0 -0.06px">6</span><span style="margin:0 -0.06px">0</span></span></div>
<div class="a nw b" style="left:213px;top:171px;width:40px;text-align:center;line-height:13px"><span class="l"><span style="margin:0 -0.06px">2</span></span></div>
<div class="a nw b" style="left:256px;top:171px;line-height:13px">地下一层</div>
<div class="a nw b" style="left:336px;top:171px;line-height:13px">建筑面积<span class="l">b</span></div>
<div class="a nw b" style="left:417px;top:171px;line-height:13px"><span class="l"><span style="margin:0 -0.06px">1</span><span style="margin:0 -0.06px">5</span><span style="margin:0 -0.06px">2</span><span style="margin:0 -0.06px">0</span><span style="margin:0 0.47px">.</span><span style="margin:0 -0.06px">9</span><span style="margin:0 -0.06px">6</span><span style="margin:0 -0.06px">0</span></span></div>
<div class="a nw b" style="left:901px;top:171px;width:82px;text-align:right;line-height:13px"><span class="l"><span style="margin:0 -0.06px">1</span><span style="margin:0 -0.06px">5</span><span style="margin:0 -0.06px">2</span><span style="margin:0 -0.06px">0</span><span style="margin:0 0.47px">.</span><span style="margin:0 -0.06px">9</span><span style="margin:0 -0.06px">6</span><span style="margin:0 -0.06px">0</span></span></div>
<div class="a nw b" style="left:213px;top:188px;width:40px;text-align:center;line-height:13px"><span class="l"><span style="margin:0 -0.06px">3</span></span></div>
<div class="a nw b" style="left:256px;top:188px;line-height:13px">一层</div>
<div class="a nw b" style="left:336px;top:188px;line-height:13px">建筑面积<span class="l">c</span></div>
<div class="a nw b" style="left:417px;top:188px;line-height:13px"><span class="l"><span style="margin:0 0.17px">(</span></span><span style="font-size:13px;margin:0 -0.5px;line-height:13px">①</span>～<span style="font-size:13px;margin:0 -0.5px;line-height:13px">⑧</span><span class="l"><span style="margin:0 -0.06px">4</span><span style="margin:0 -0.06px">5</span><span style="margin:0 0.47px">.</span><span style="margin:0 -0.06px">0</span><span style="margin:0 0.79px">+</span><span style="margin:0 -0.06px">0</span><span style="margin:0 0.47px">.</span><span style="margin:0 -0.06px">1</span><span style="margin:0 0.86px">*</span><span style="margin:0 -0.06px">2</span></span>）<span class="l"><span style="margin:0 0.86px">*</span></span>（<span class="l"><span style="margin:0 0.67px">{</span><span style="margin:0 -0.17px">A</span></span>～<span class="l"><span style="margin:0 -0.17px">D</span><span style="margin:0 0.67px">}</span><span style="margin:0 -0.06px">2</span><span style="margin:0 -0.06px">1</span><span style="margin:0 0.47px">.</span><span style="margin:0 -0.06px">9</span><span style="margin:0 0.79px">+</span><span style="margin:0 -0.06px">0</span><span style="margin:0 0.47px">.</span><span style="margin:0 -0.06px">1</span><span style="margin:0 0.86px">*</span><span style="margin:0 -0.06px">2</span></span>）<span class="l"><span style="margin:0 0.17px">-</span><span style="margin:0 0.67px">{</span><span style="margin:0 -0.17px">A</span></span>～<span class="l"><span style="margin:0 -0.40px">B</span></span><span style="font-size:13px;margin:0 -0.5px;line-height:13px">①</span>～<span style="font-size:13px;margin:0 -0.5px;line-height:13px">②</span><span class="l"><span style="margin:0 0.67px">}</span><span style="margin:0 -0.06px">7</span><span style="margin:0 0.47px">.</span><span style="margin:0 -0.06px">6</span><span style="margin:0 0.86px">*</span></span>（<span class="l"><span style="margin:0 -0.06px">5</span><span style="margin:0 0.47px">.</span><span style="margin:0 -0.06px">0</span><span style="margin:0 -0.06px">5</span><span style="margin:0 0.79px">+</span><span style="margin:0 -0.06px">2</span><span style="margin:0 0.47px">.</span><span style="margin:0 -0.06px">5</span><span style="margin:0 -0.06px">5</span></span>）<span class="l"><span style="margin:0 0.79px">+</span></span>（<br><span class="l"><span style="margin:0 -0.06px">3</span><span style="margin:0 0.47px">.</span><span style="margin:0 -0.06px">1</span><span style="margin:0 -0.06px">4</span><span style="margin:0 0.86px">*</span><span style="margin:0 0.67px">{</span><span style="margin:0 -0.42px">R</span><span style="margin:0 0.67px">}</span><span style="margin:0 -0.06px">7</span><span style="margin:0 0.47px">.</span><span style="margin:0 -0.06px">6</span><span style="margin:0 0.86px">*</span><span style="margin:0 -0.06px">7</span><span style="margin:0 0.47px">.</span><span style="margin:0 -0.06px">6</span><span style="margin:0 0.86px">*</span><span style="margin:0 -0.06px">7</span><span style="margin:0 -0.06px">1</span><span style="margin:0 0.47px">.</span><span style="margin:0 -0.06px">4</span><span style="margin:0 0.47px">/</span><span style="margin:0 -0.06px">3</span><span style="margin:0 -0.06px">6</span><span style="margin:0 -0.06px">0</span></span>）<span class="l"><span style="margin:0 0.79px">+</span><span style="margin:0 -0.06px">2</span><span style="margin:0 0.47px">.</span><span style="margin:0 -0.06px">5</span><span style="margin:0 -0.06px">5</span><span style="margin:0 0.86px">*</span><span style="margin:0 -0.06px">7</span><span style="margin:0 0.47px">.</span><span style="margin:0 -0.06px">6</span><span style="margin:0 0.86px">*</span><span style="margin:0 -0.06px">1</span><span style="margin:0 0.47px">/</span><span style="margin:0 -0.06px">2</span><span style="margin:0 0.17px">-</span><span style="margin:0 -0.06px">6</span><span style="margin:0 0.47px">.</span><span style="margin:0 -0.06px">4</span><span style="margin:0 -0.06px">5</span><span style="margin:0 0.86px">*</span></span>（<span class="l"><span style="margin:0 -0.06px">5</span><span style="margin:0 0.47px">.</span><span style="margin:0 -0.06px">0</span><span style="margin:0 -0.06px">5</span><span style="margin:0 0.79px">+</span><span style="margin:0 -0.06px">1</span><span style="margin:0 0.47px">.</span><span style="margin:0 -0.06px">3</span><span style="margin:0 -0.06px">5</span></span>）<span class="l"><span style="margin:0 0.79px">+</span></span>（<br><span class="l"><span style="margin:0 -0.06px">3</span><span style="margin:0 0.47px">.</span><span style="margin:0 -0.06px">1</span><span style="margin:0 -0.06px">4</span><span style="margin:0 0.86px">*</span><span style="margin:0 0.67px">{</span><span style="margin:0 -0.42px">R</span><span style="margin:0 0.67px">}</span><span style="margin:0 -0.06px">6</span><span style="margin:0 0.47px">.</span><span style="margin:0 -0.06px">4</span><span style="margin:0 -0.06px">5</span><span style="margin:0 0.86px">*</span><span style="margin:0 -0.06px">6</span><span style="margin:0 0.47px">.</span><span style="margin:0 -0.06px">4</span><span style="margin:0 -0.06px">5</span><span style="margin:0 0.86px">*</span><span style="margin:0 -0.06px">7</span><span style="margin:0 -0.06px">8</span><span style="margin:0 0.47px">.</span><span style="margin:0 -0.06px">1</span><span style="margin:0 0.47px">/</span><span style="margin:0 -0.06px">3</span><span style="margin:0 -0.06px">6</span><span style="margin:0 -0.06px">0</span></span>）<span class="l"><span style="margin:0 0.79px">+</span><span style="margin:0 -0.06px">1</span><span style="margin:0 0.47px">.</span><span style="margin:0 -0.06px">3</span><span style="margin:0 -0.06px">5</span><span style="margin:0 0.86px">*</span><span style="margin:0 -0.06px">6</span><span style="margin:0 0.47px">.</span><span style="margin:0 -0.06px">4</span><span style="margin:0 -0.06px">5</span><span style="margin:0 0.86px">*</span><span style="margin:0 -0.06px">1</span><span style="margin:0 0.47px">/</span><span style="margin:0 -0.06px">2</span><span style="margin:0 0.17px">-</span><span style="margin:0 0.67px">{</span><span style="margin:0 -0.17px">A</span></span>～<span class="l"><span style="margin:0 -0.06px">1</span><span style="margin:0 0.47px">/</span><span style="margin:0 -0.17px">A</span><span style="margin:0 0.67px">}</span><span style="margin:0 -0.06px">1</span><span style="margin:0 0.47px">.</span><span style="margin:0 -0.06px">8</span><span style="margin:0 0.86px">*</span></span>（<span style="font-size:13px;margin:0 -0.5px;line-height:13px">⑦</span>～<span style="font-size:13px;margin:0 -0.5px;line-height:13px">⑧</span><span class="l"><span style="margin:0 -0.06px">4</span><span style="margin:0 0.47px">.</span><span style="margin:0 -0.06px">9</span><span style="margin:0 -0.06px">5</span><span style="margin:0 0.79px">+</span><span style="margin:0 -0.06px">0</span><span style="margin:0 0.47px">.</span><span style="margin:0 -0.06px">1</span><span style="margin:0 0.17px">-</span><span style="margin:0 -0.06px">0</span><span style="margin:0 0.47px">.</span><span style="margin:0 -0.06px">4</span><span style="margin:0 -0.06px">5</span></span>）<br><span class="l"><span style="margin:0 0.86px">*</span><span style="margin:0 -0.06px">1</span><span style="margin:0 0.47px">/</span><span style="margin:0 -0.06px">2</span><span style="margin:0 0.17px">-</span></span>（<span class="l"><span style="margin:0 0.67px">{</span><span style="margin:0 -0.06px">1</span><span style="margin:0 0.47px">/</span><span style="margin:0 -0.17px">A</span></span>～<span class="l"><span style="margin:0 -0.40px">B</span><span style="margin:0 0.67px">}</span><span style="margin:0 -0.06px">0</span><span style="margin:0 0.47px">.</span><span style="margin:0 -0.06px">8</span><span style="margin:0 0.17px">-</span><span style="margin:0 -0.06px">0</span><span style="margin:0 0.47px">.</span><span style="margin:0 -0.06px">1</span><span style="margin:0 -0.06px">9</span><span style="margin:0 0.79px">+</span><span style="margin:0 -0.06px">0</span><span style="margin:0 0.47px">.</span><span style="margin:0 -0.06px">1</span></span>）<span class="l"><span style="margin:0 0.86px">*</span></span>（<span class="l"><span style="margin:0 -0.06px">5</span><span style="margin:0 0.47px">.</span><span style="margin:0 -0.06px">7</span><span style="margin:0 0.79px">+</span><span style="margin:0 -0.06px">0</span><span style="margin:0 0.47px">.</span><span style="margin:0 -0.06px">4</span><span style="margin:0 -0.06px">5</span><span style="margin:0 0.17px">-</span><span style="margin:0 -0.06px">0</span><span style="margin:0 0.47px">.</span><span style="margin:0 -0.06px">8</span></span>）<span class="l"><span style="margin:0 0.86px">*</span><span style="margin:0 -0.06px">1</span><span style="margin:0 0.47px">/</span><span style="margin:0 -0.06px">2</span></span></div>
<div class="a nw b" style="left:901px;top:188px;width:82px;text-align:right;line-height:13px"><span class="l"><span style="margin:0 -0.06px">9</span><span style="margin:0 -0.06px">7</span><span style="margin:0 -0.06px">2</span><span style="margin:0 0.47px">.</span><span style="margin:0 -0.06px">1</span><span style="margin:0 -0.06px">9</span><span style="margin:0 -0.06px">5</span></span></div>
<div class="a nw b" style="left:213px;top:244px;width:40px;text-align:center;line-height:13px"><span class="l"><span style="margin:0 -0.06px">4</span></span></div>
<div class="a nw b" style="left:256px;top:244px;line-height:13px">二层</div>
<div class="a nw b" style="left:336px;top:244px;line-height:13px">建筑面积<span class="l">d</span></div>
<div class="a nw b" style="left:417px;top:244px;line-height:13px"><span class="l"><span style="margin:0 -0.06px">9</span><span style="margin:0 -0.06px">7</span><span style="margin:0 -0.06px">2</span><span style="margin:0 0.47px">.</span><span style="margin:0 -0.06px">1</span><span style="margin:0 -0.06px">9</span><span style="margin:0 -0.06px">5</span><span style="margin:0 0.79px">+</span></span>（<span class="l"><span style="margin:0 0.67px">{</span><span style="margin:0 -0.06px">1</span><span style="margin:0 0.47px">/</span><span style="margin:0 -0.17px">A</span></span>～<span class="l"><span style="margin:0 -0.40px">B</span><span style="margin:0 0.67px">}</span><span style="margin:0 -0.06px">0</span><span style="margin:0 0.47px">.</span><span style="margin:0 -0.06px">8</span><span style="margin:0 0.17px">-</span><span style="margin:0 -0.06px">0</span><span style="margin:0 0.47px">.</span><span style="margin:0 -0.06px">1</span><span style="margin:0 -0.06px">9</span><span style="margin:0 0.79px">+</span><span style="margin:0 -0.06px">0</span><span style="margin:0 0.47px">.</span><span style="margin:0 -0.06px">1</span></span>）<span class="l"><span style="margin:0 0.86px">*</span></span>（<span class="l"><span style="margin:0 -0.06px">5</span><span style="margin:0 0.47px">.</span><span style="margin:0 -0.06px">7</span><span style="margin:0 0.17px">-</span><span style="margin:0 -0.06px">0</span><span style="margin:0 0.47px">.</span><span style="margin:0 -0.06px">4</span><span style="margin:0 -0.06px">5</span><span style="margin:0 0.17px">-</span><span style="margin:0 -0.06px">0</span><span style="margin:0 0.47px">.</span><span style="margin:0 -0.06px">8</span></span>）<span class="l"><span style="margin:0 0.86px">*</span><span style="margin:0 -0.06px">1</span><span style="margin:0 0.47px">/</span><span style="margin:0 -0.06px">2</span><span style="margin:0 0.17px">-</span><span style="margin:0 0.67px">{</span><span style="margin:0 -0.17px">A</span></span>～<span class="l"><span style="margin:0 -0.06px">1</span><span style="margin:0 0.47px">/</span><span style="margin:0 -0.17px">A</span><span style="margin:0 0.67px">}</span><span style="margin:0 -0.06px">1</span><span style="margin:0 0.47px">.</span><span style="margin:0 -0.06px">8</span><span style="margin:0 0.86px">*</span></span>（<span style="font-size:13px;margin:0 -0.5px;line-height:13px">⑦</span>～<span style="font-size:13px;margin:0 -0.5px;line-height:13px">⑧</span><br><span class="l"><span style="margin:0 -0.06px">4</span><span style="margin:0 0.47px">.</span><span style="margin:0 -0.06px">9</span><span style="margin:0 -0.06px">5</span><span style="margin:0 0.79px">+</span><span style="margin:0 -0.06px">0</span><span style="margin:0 0.47px">.</span><span style="margin:0 -0.06px">1</span><span style="margin:0 0.17px">-</span><span style="margin:0 -0.06px">0</span><span style="margin:0 0.47px">.</span><span style="margin:0 -0.06px">4</span><span style="margin:0 -0.06px">5</span></span>）<span class="l"><span style="margin:0 0.86px">*</span><span style="margin:0 -0.06px">1</span><span style="margin:0 0.47px">/</span><span style="margin:0 -0.06px">2</span><span style="margin:0 0.17px">-</span><span style="margin:0 -0.06px">1</span><span style="margin:0 0.47px">.</span><span style="margin:0 -0.06px">8</span><span style="margin:0 0.86px">*</span></span>（<span class="l"><span style="margin:0 -0.06px">0</span><span style="margin:0 0.47px">.</span><span style="margin:0 -0.06px">4</span><span style="margin:0 -0.06px">5</span><span style="margin:0 0.17px">-</span><span style="margin:0 -0.06px">0</span><span style="margin:0 0.47px">.</span><span style="margin:0 -0.06px">1</span></span>）</div>
<div class="a nw b" style="left:901px;top:244px;width:82px;text-align:right;line-height:13px"><span class="l"><span style="margin:0 -0.06px">9</span><span style="margin:0 -0.06px">6</span><span style="margin:0 -0.06px">9</span><span style="margin:0 0.47px">.</span><span style="margin:0 -0.06px">0</span><span style="margin:0 -0.06px">0</span><span style="margin:0 -0.06px">5</span></span></div>
<div class="a nw b" style="left:213px;top:274px;width:40px;text-align:center;line-height:13px"><span class="l"><span style="margin:0 -0.06px">5</span></span></div>
<div class="a nw b" style="left:256px;top:274px;line-height:13px">三层</div>
<div class="a nw b" style="left:336px;top:274px;line-height:13px">建筑面积<span class="l">e</span></div>
<div class="a nw b" style="left:417px;top:274px;line-height:13px"><span class="l"><span style="margin:0 -0.06px">9</span><span style="margin:0 -0.06px">6</span><span style="margin:0 -0.06px">9</span><span style="margin:0 0.47px">.</span><span style="margin:0 -0.06px">0</span><span style="margin:0 -0.06px">0</span><span style="margin:0 -0.06px">5</span></span></div>
<div class="a nw b" style="left:901px;top:274px;width:82px;text-align:right;line-height:13px"><span class="l"><span style="margin:0 -0.06px">9</span><span style="margin:0 -0.06px">6</span><span style="margin:0 -0.06px">9</span><span style="margin:0 0.47px">.</span><span style="margin:0 -0.06px">0</span><span style="margin:0 -0.06px">0</span><span style="margin:0 -0.06px">5</span></span></div>
<div class="a nw b" style="left:213px;top:291px;width:40px;text-align:center;line-height:13px"><span class="l"><span style="margin:0 -0.06px">6</span></span></div>
<div class="a nw b" style="left:256px;top:291px;line-height:13px">四层</div>
<div class="a nw b" style="left:336px;top:291px;line-height:13px">建筑面积<span class="l">f</span></div>
<div class="a nw b" style="left:417px;top:291px;line-height:13px"><span class="l"><span style="margin:0 -0.06px">9</span><span style="margin:0 -0.06px">6</span><span style="margin:0 -0.06px">9</span><span style="margin:0 0.47px">.</span><span style="margin:0 -0.06px">0</span><span style="margin:0 -0.06px">0</span><span style="margin:0 -0.06px">5</span><span style="margin:0 0.17px">-</span><span style="margin:0 0.67px">{</span><span style="margin:0 -0.06px">1</span><span style="margin:0 0.47px">/</span><span style="margin:0 -0.72px">C</span><span style="margin:0 0.67px">}</span><span style="margin:0 -0.06px">2</span><span style="margin:0 0.47px">.</span><span style="margin:0 -0.06px">1</span><span style="margin:0 0.86px">*</span></span>（<span class="l"><span style="margin:0 -0.06px">4</span><span style="margin:0 0.47px">.</span><span style="margin:0 -0.06px">9</span><span style="margin:0 -0.06px">5</span><span style="margin:0 0.17px">-</span><span style="margin:0 -0.06px">2</span><span style="margin:0 0.47px">.</span><span style="margin:0 -0.06px">4</span></span>）<span class="l"><span style="margin:0 0.79px">+</span></span><span style="font-size:13px;margin:0 -0.5px;line-height:13px">③</span>～<span style="font-size:13px;margin:0 -0.5px;line-height:13px">④</span>阳台<span class="l"><span style="margin:0 -0.06px">1</span><span style="margin:0 0.47px">.</span><span style="margin:0 -0.06px">5</span><span style="margin:0 0.86px">*</span></span>（<span class="l"><span style="margin:0 -0.06px">6</span><span style="margin:0 0.47px">.</span><span style="margin:0 -0.06px">6</span><span style="margin:0 0.79px">+</span><span style="margin:0 -0.06px">0</span><span style="margin:0 0.47px">.</span><span style="margin:0 -0.06px">1</span><span style="margin:0 -0.06px">7</span><span style="margin:0 -0.06px">5</span><span style="margin:0 0.79px">+</span><span style="margin:0 -0.06px">0</span><span style="margin:0 0.47px">.</span><span style="margin:0 -0.06px">1</span><span style="margin:0 -0.06px">5</span></span>）<span class="l"><span style="margin:0 0.86px">*</span><span style="margin:0 -0.06px">1</span><span style="margin:0 0.47px">/</span><span style="margin:0 -0.06px">2</span><span style="margin:0 0.86px">*</span><span style="margin:0 -0.06px">2</span></span></div>
<div class="a nw b" style="left:901px;top:291px;width:82px;text-align:right;line-height:13px"><span class="l"><span style="margin:0 -0.06px">9</span><span style="margin:0 -0.06px">7</span><span style="margin:0 -0.06px">4</span><span style="margin:0 0.47px">.</span><span style="margin:0 -0.06px">0</span><span style="margin:0 -0.06px">3</span><span style="margin:0 -0.06px">8</span></span></div>
<div class="a nw b" style="left:213px;top:308px;width:40px;text-align:center;line-height:13px"><span class="l"><span style="margin:0 -0.06px">7</span></span></div>
<div class="a nw b" style="left:256px;top:308px;line-height:13px">五层</div>
<div class="a nw b" style="left:336px;top:308px;line-height:13px">建筑面积<span class="l">g</span></div>
<div class="a nw b" style="left:417px;top:308px;line-height:13px"><span class="l"><span style="margin:0 -0.06px">9</span><span style="margin:0 -0.06px">7</span><span style="margin:0 -0.06px">4</span><span style="margin:0 0.47px">.</span><span style="margin:0 -0.06px">0</span><span style="margin:0 -0.06px">3</span><span style="margin:0 -0.06px">8</span></span></div>
<div class="a nw b" style="left:901px;top:308px;width:82px;text-align:right;line-height:13px"><span class="l"><span style="margin:0 -0.06px">9</span><span style="margin:0 -0.06px">7</span><span style="margin:0 -0.06px">4</span><span style="margin:0 0.47px">.</span><span style="margin:0 -0.06px">0</span><span style="margin:0 -0.06px">3</span><span style="margin:0 -0.06px">8</span></span></div>
<div class="a nw b" style="left:213px;top:325px;width:40px;text-align:center;line-height:13px"><span class="l"><span style="margin:0 -0.06px">8</span></span></div>
<div class="a nw b" style="left:256px;top:325px;line-height:13px">六层～九层</div>
<div class="a nw b" style="left:336px;top:325px;line-height:13px">建筑面积<span class="l">h</span></div>
<div class="a nw b" style="left:417px;top:325px;line-height:13px"><span class="l"><span style="margin:0 -0.06px">9</span><span style="margin:0 -0.06px">7</span><span style="margin:0 -0.06px">4</span><span style="margin:0 0.47px">.</span><span style="margin:0 -0.06px">0</span><span style="margin:0 -0.06px">3</span><span style="margin:0 -0.06px">8</span><span style="margin:0 0.86px">*</span><span style="margin:0 -0.06px">4</span></span></div>
<div class="a nw b" style="left:901px;top:325px;width:82px;text-align:right;line-height:13px"><span class="l"><span style="margin:0 -0.06px">3</span><span style="margin:0 -0.06px">8</span><span style="margin:0 -0.06px">9</span><span style="margin:0 -0.06px">6</span><span style="margin:0 0.47px">.</span><span style="margin:0 -0.06px">1</span><span style="margin:0 -0.06px">5</span><span style="margin:0 -0.06px">2</span></span></div>
<div class="a nw b" style="left:213px;top:342px;width:40px;text-align:center;line-height:13px"><span class="l"><span style="margin:0 -0.06px">9</span></span></div>
<div class="a nw b" style="left:256px;top:342px;line-height:13px">十层</div>
<div class="a nw b" style="left:336px;top:342px;line-height:13px">建筑面积<span class="l">i</span></div>
<div class="a nw b" style="left:417px;top:342px;line-height:13px"><span class="l"><span style="margin:0 -0.06px">9</span><span style="margin:0 -0.06px">7</span><span style="margin:0 -0.06px">4</span><span style="margin:0 0.47px">.</span><span style="margin:0 -0.06px">0</span><span style="margin:0 -0.06px">3</span><span style="margin:0 -0.06px">8</span><span style="margin:0 0.17px">-</span></span>采光井<span class="l"><span style="margin:0 -0.06px">1</span><span style="margin:0 0.47px">.</span><span style="margin:0 -0.06px">9</span><span style="margin:0 0.86px">*</span></span>（<span style="font-size:13px;margin:0 -0.5px;line-height:13px">④</span>～<span style="font-size:13px;margin:0 -0.5px;line-height:13px">⑤</span><span class="l"><span style="margin:0 -0.06px">6</span><span style="margin:0 0.47px">.</span><span style="margin:0 -0.06px">3</span><span style="margin:0 0.79px">+</span><span style="margin:0 -0.06px">1</span><span style="margin:0 0.47px">.</span><span style="margin:0 -0.06px">5</span><span style="margin:0 0.79px">+</span><span style="margin:0 -0.06px">2</span><span style="margin:0 0.47px">.</span><span style="margin:0 -0.06px">7</span></span>）<span class="l"><span style="margin:0 0.17px">-</span></span><span style="font-size:13px;margin:0 -0.5px;line-height:13px">①</span>～<span style="font-size:13px;margin:0 -0.5px;line-height:13px">②</span><span class="l"><span style="margin:0 -0.06px">4</span><span style="margin:0 0.47px">.</span><span style="margin:0 -0.06px">9</span><span style="margin:0 -0.06px">5</span><span style="margin:0 0.86px">*</span></span>（<span class="l"><span style="margin:0 -0.06px">8</span><span style="margin:0 0.47px">.</span><span style="margin:0 -0.06px">1</span><span style="margin:0 0.17px">-</span><span style="margin:0 -0.06px">2</span><span style="margin:0 0.47px">.</span><span style="margin:0 -0.06px">7</span><span style="margin:0 0.17px">-</span><span style="margin:0 -0.06px">0</span><span style="margin:0 0.47px">.</span><span style="margin:0 -0.06px">1</span><span style="margin:0 0.86px">*</span><span style="margin:0 -0.06px">2</span></span>）<span class="l"><span style="margin:0 0.79px">+</span><span style="margin:0 0.67px">{</span><span style="margin:0 -0.17px">A</span></span>～<span class="l"><span style="margin:0 -0.06px">1</span><span style="margin:0 0.47px">/</span><span style="margin:0 -0.17px">A</span><span style="margin:0 0.67px">}</span></span><br>卫生间<span class="l"><span style="margin:0 -0.06px">2</span><span style="margin:0 0.47px">.</span><span style="margin:0 -0.06px">4</span><span style="margin:0 0.86px">*</span><span style="margin:0 -0.06px">1</span><span style="margin:0 0.47px">.</span><span style="margin:0 -0.06px">8</span><span style="margin:0 0.79px">+</span></span>西阳台<span class="l"><span style="margin:0 0.67px">{</span><span style="margin:0 -0.40px">B</span></span>～<span class="l"><span style="margin:0 -0.72px">C</span><span style="margin:0 0.67px">}</span><span style="margin:0 0.47px">[</span></span>（<span class="l"><span style="margin:0 -0.06px">0</span><span style="margin:0 0.47px">.</span><span style="margin:0 -0.06px">6</span><span style="margin:0 -0.06px">7</span><span style="margin:0 -0.06px">5</span><span style="margin:0 0.86px">*</span><span style="margin:0 -0.06px">2</span><span style="margin:0 0.79px">+</span><span style="margin:0 -0.06px">1</span><span style="margin:0 0.47px">.</span><span style="margin:0 -0.06px">5</span></span>）<span class="l"><span style="margin:0 0.86px">*</span></span>（<span class="l"><span style="margin:0 -0.06px">3</span><span style="margin:0 0.47px">.</span><span style="margin:0 -0.06px">3</span><span style="margin:0 0.17px">-</span><span style="margin:0 -0.06px">2</span><span style="margin:0 0.47px">.</span><span style="margin:0 -0.06px">9</span><span style="margin:0 -0.06px">5</span></span>）<br><span class="l"><span style="margin:0 0.79px">+</span><span style="margin:0 -0.06px">1</span><span style="margin:0 0.47px">/</span><span style="margin:0 -0.06px">4</span><span style="margin:0 0.86px">*</span><span style="margin:0 0.67px">{</span><span style="margin:0 -0.42px">R</span><span style="margin:0 0.67px">}</span><span style="margin:0 -0.06px">2</span><span style="margin:0 0.47px">.</span><span style="margin:0 -0.06px">9</span><span style="margin:0 -0.06px">5</span><span style="margin:0 0.86px">*</span><span style="margin:0 -0.06px">2</span><span style="margin:0 0.47px">.</span><span style="margin:0 -0.06px">9</span><span style="margin:0 -0.06px">5</span><span style="margin:0 0.86px">*</span><span style="margin:0 -0.06px">3</span><span style="margin:0 0.47px">.</span><span style="margin:0 -0.06px">1</span><span style="margin:0 -0.06px">4</span><span style="margin:0 0.47px">]</span><span style="margin:0 0.86px">*</span><span style="margin:0 -0.06px">1</span><span style="margin:0 0.47px">/</span><span style="margin:0 -0.06px">2</span><span style="margin:0 0.79px">+</span></span><span style="font-size:13px;margin:0 -0.5px;line-height:13px">②</span>～<span style="font-size:13px;margin:0 -0.5px;line-height:13px">③</span>弧形<span class="l"><span style="margin:0 -0.06px">1</span><span style="margin:0 0.47px">/</span><span style="margin:0 -0.06px">2</span><span style="margin:0 0.86px">*</span></span>（<span class="l"><span style="margin:0 -0.06px">1</span><span style="margin:0 0.47px">.</span><span style="margin:0 -0.06px">5</span><span style="margin:0 0.17px">-</span><span style="margin:0 -0.06px">0</span><span style="margin:0 0.47px">.</span><span style="margin:0 -0.06px">2</span></span>）<span class="l"><span style="margin:0 0.86px">*</span></span>（<span class="l"><span style="margin:0 -0.06px">1</span><span style="margin:0 0.47px">.</span><span style="margin:0 -0.06px">5</span><span style="margin:0 0.17px">-</span><span style="margin:0 -0.06px">0</span><span style="margin:0 0.47px">.</span><span style="margin:0 -0.06px">2</span></span>）<span class="l"><span style="margin:0 0.86px">*</span><span style="margin:0 -0.06px">3</span><span style="margin:0 0.47px">.</span><span style="margin:0 -0.06px">1</span><span style="margin:0 -0.06px">4</span><span style="margin:0 0.17px">-</span></span>北阳台（<br><span class="l"><span style="margin:0 -0.06px">1</span><span style="margin:0 0.47px">.</span><span style="margin:0 -0.06px">5</span><span style="margin:0 0.79px">+</span><span style="margin:0 -0.06px">0</span><span style="margin:0 0.47px">.</span><span style="margin:0 -0.06px">1</span><span style="margin:0 0.17px">-</span><span style="margin:0 -0.06px">0</span><span style="margin:0 0.47px">.</span><span style="margin:0 -0.06px">1</span></span>）<span class="l"><span style="margin:0 0.86px">*</span></span>（<span class="l"><span style="margin:0 -0.06px">3</span><span style="margin:0 0.47px">.</span><span style="margin:0 -0.06px">3</span><span style="margin:0 0.17px">-</span><span style="margin:0 -0.06px">0</span><span style="margin:0 0.47px">.</span><span style="margin:0 -0.06px">1</span><span style="margin:0 0.17px">-</span><span style="margin:0 -0.06px">0</span><span style="margin:0 0.47px">.</span><span style="margin:0 -0.06px">2</span></span>）<span class="l"><span style="margin:0 0.86px">*</span><span style="margin:0 -0.06px">1</span><span style="margin:0 0.47px">/</span><span style="margin:0 -0.06px">2</span><span style="margin:0 0.17px">-</span></span>北<span style="font-size:13px;margin:0 -0.5px;line-height:13px">③</span>～<span style="font-size:13px;margin:0 -0.5px;line-height:13px">④</span>阳台<span class="l"><span style="margin:0 -0.06px">1</span><span style="margin:0 0.47px">.</span><span style="margin:0 -0.06px">5</span><span style="margin:0 0.86px">*</span></span>（<span class="l"><span style="margin:0 -0.06px">5</span><span style="margin:0 0.47px">.</span><span style="margin:0 -0.06px">4</span><span style="margin:0 0.17px">-</span><span style="margin:0 -0.06px">0</span><span style="margin:0 0.47px">.</span><span style="margin:0 -0.06px">2</span><span style="margin:0 0.17px">-</span><span style="margin:0 -0.06px">0</span><span style="margin:0 0.47px">.</span><span style="margin:0 -0.06px">1</span></span>）<span class="l"><span style="margin:0 0.86px">*</span><span style="margin:0 -0.06px">1</span><span style="margin:0 0.47px">/</span><span style="margin:0 -0.06px">2</span><span style="margin:0 0.17px">-</span></span>南阳台<span class="l"><span style="margin:0 -0.06px">1</span><span style="margin:0 0.47px">.</span><span style="margin:0 -0.06px">5</span><span style="margin:0 0.86px">*</span></span><br>（<span class="l"><span style="margin:0 -0.06px">3</span><span style="margin:0 0.47px">.</span><span style="margin:0 -0.06px">3</span><span style="margin:0 0.17px">-</span><span style="margin:0 -0.06px">0</span><span style="margin:0 0.47px">.</span><span style="margin:0 -0.06px">2</span></span>）<span class="l"><span style="margin:0 0.86px">*</span><span style="margin:0 -0.06px">1</span><span style="margin:0 0.47px">/</span><span style="margin:0 -0.06px">2</span><span style="margin:0 0.86px">*</span><span style="margin:0 -0.06px">2</span></span></div>
<div class="a nw b" style="left:901px;top:342px;width:82px;text-align:right;line-height:13px"><span class="l"><span style="margin:0 -0.06px">9</span><span style="margin:0 -0.06px">2</span><span style="margin:0 -0.06px">8</span><span style="margin:0 0.47px">.</span><span style="margin:0 -0.06px">5</span><span style="margin:0 -0.06px">1</span><span style="margin:0 -0.06px">1</span></span></div>
<div class="a nw b" style="left:213px;top:411px;width:40px;text-align:center;line-height:13px"><span class="l"><span style="margin:0 -0.06px">1</span><span style="margin:0 -0.06px">0</span></span></div>
<div class="a nw b" style="left:256px;top:411px;line-height:13px">十一层</div>
<div class="a nw b" style="left:336px;top:411px;line-height:13px">建筑面积<span class="l">j</span></div>
<div class="a nw b" style="left:417px;top:411px;line-height:13px"><span class="l"><span style="margin:0 -0.06px">9</span><span style="margin:0 -0.06px">2</span><span style="margin:0 -0.06px">8</span><span style="margin:0 0.47px">.</span><span style="margin:0 -0.06px">5</span><span style="margin:0 -0.06px">1</span><span style="margin:0 -0.06px">1</span><span style="margin:0 0.17px">-</span><span style="margin:0 0.67px">{</span><span style="margin:0 -0.40px">B</span></span>～<span class="l"><span style="margin:0 0.67px">}</span></span>东采光机井<span class="l"><span style="margin:0 -0.06px">4</span><span style="margin:0 0.47px">.</span><span style="margin:0 -0.06px">9</span><span style="margin:0 -0.06px">5</span><span style="margin:0 0.86px">*</span></span>（<span class="l"><span style="margin:0 -0.06px">8</span><span style="margin:0 0.47px">.</span><span style="margin:0 -0.06px">1</span><span style="margin:0 0.17px">-</span><span style="margin:0 -0.06px">2</span><span style="margin:0 0.47px">.</span><span style="margin:0 -0.06px">7</span><span style="margin:0 0.17px">-</span><span style="margin:0 -0.06px">0</span><span style="margin:0 0.47px">.</span><span style="margin:0 -0.06px">1</span><span style="margin:0 0.86px">*</span><span style="margin:0 -0.06px">2</span></span>）<span class="l"><span style="margin:0 0.79px">+</span></span>东阳台<span class="l"><span style="margin:0 0.67px">{</span><span style="margin:0 -0.40px">B</span></span>～<span class="l"><span style="margin:0 -0.72px">C</span><span style="margin:0 0.67px">}</span><span style="margin:0 0.47px">[</span></span>（<span class="l"><span style="margin:0 -0.06px">0</span><span style="margin:0 0.47px">.</span><span style="margin:0 -0.06px">6</span><span style="margin:0 -0.06px">7</span><span style="margin:0 -0.06px">5</span><span style="margin:0 0.86px">*</span><span style="margin:0 -0.06px">2</span><span style="margin:0 0.79px">+</span><span style="margin:0 -0.06px">1</span><span style="margin:0 0.47px">.</span><span style="margin:0 -0.06px">5</span></span>）<span class="l"><span style="margin:0 0.86px">*</span></span>（<br><span class="l"><span style="margin:0 -0.06px">3</span><span style="margin:0 0.47px">.</span><span style="margin:0 -0.06px">3</span><span style="margin:0 0.17px">-</span><span style="margin:0 -0.06px">2</span><span style="margin:0 0.47px">.</span><span style="margin:0 -0.06px">9</span><span style="margin:0 -0.06px">5</span></span>）<span class="l"><span style="margin:0 0.79px">+</span><span style="margin:0 -0.06px">1</span><span style="margin:0 0.47px">/</span><span style="margin:0 -0.06px">4</span><span style="margin:0 0.86px">*</span><span style="margin:0 0.67px">{</span><span style="margin:0 -0.42px">R</span><span style="margin:0 0.67px">}</span><span style="margin:0 -0.06px">2</span><span style="margin:0 0.47px">.</span><span style="margin:0 -0.06px">9</span><span style="margin:0 -0.06px">5</span><span style="margin:0 0.86px">*</span><span style="margin:0 -0.06px">2</span><span style="margin:0 0.47px">.</span><span style="margin:0 -0.06px">9</span><span style="margin:0 -0.06px">5</span><span style="margin:0 0.86px">*</span><span style="margin:0 -0.06px">3</span><span style="margin:0 0.47px">.</span><span style="margin:0 -0.06px">1</span><span style="margin:0 -0.06px">4</span><span style="margin:0 0.47px">]</span><span style="margin:0 0.86px">*</span><span style="margin:0 -0.06px">1</span><span style="margin:0 0.47px">/</span><span style="margin:0 -0.06px">2</span></span></div>
<div class="a nw b" style="left:901px;top:411px;width:82px;text-align:right;line-height:13px"><span class="l"><span style="margin:0 -0.06px">9</span><span style="margin:0 -0.06px">0</span><span style="margin:0 -0.06px">6</span><span style="margin:0 0.47px">.</span><span style="margin:0 -0.06px">6</span><span style="margin:0 -0.06px">8</span><span style="margin:0 -0.06px">5</span></span></div>
<div class="a nw b" style="left:213px;top:441px;width:40px;text-align:center;line-height:13px"><span class="l"><span style="margin:0 -0.06px">1</span><span style="margin:0 -0.06px">1</span></span></div>
<div class="a nw b" style="left:256px;top:441px;line-height:13px">十二层～十八<br>层</div>
<div class="a nw b" style="left:336px;top:441px;line-height:13px">建筑面积<span class="l">k</span></div>
<div class="a nw b" style="left:417px;top:441px;line-height:13px"><span class="l"><span style="margin:0 -0.06px">9</span><span style="margin:0 -0.06px">0</span><span style="margin:0 -0.06px">6</span><span style="margin:0 0.47px">.</span><span style="margin:0 -0.06px">6</span><span style="margin:0 -0.06px">8</span><span style="margin:0 -0.06px">5</span><span style="margin:0 0.86px">*</span><span style="margin:0 -0.06px">7</span></span></div>
<div class="a nw b" style="left:901px;top:441px;width:82px;text-align:right;line-height:13px"><span class="l"><span style="margin:0 -0.06px">6</span><span style="margin:0 -0.06px">3</span><span style="margin:0 -0.06px">4</span><span style="margin:0 -0.06px">6</span><span style="margin:0 0.47px">.</span><span style="margin:0 -0.06px">7</span><span style="margin:0 -0.06px">9</span><span style="margin:0 -0.06px">5</span></span></div>
<div class="a nw b" style="left:213px;top:471px;width:40px;text-align:center;line-height:13px"><span class="l"><span style="margin:0 -0.06px">1</span><span style="margin:0 -0.06px">2</span></span></div>
<div class="a nw b" style="left:256px;top:471px;line-height:13px">十九层</div>
<div class="a nw b" style="left:336px;top:471px;line-height:13px">建筑面积<span class="l">l</span></div>
<div class="a nw b" style="left:417px;top:471px;line-height:13px"><span class="l"><span style="margin:0 -0.06px">9</span><span style="margin:0 -0.06px">0</span><span style="margin:0 -0.06px">6</span><span style="margin:0 0.47px">.</span><span style="margin:0 -0.06px">6</span><span style="margin:0 -0.06px">8</span><span style="margin:0 -0.06px">5</span><span style="margin:0 0.17px">-</span></span>东阳台<span class="l"><span style="margin:0 0.67px">{</span><span style="margin:0 -0.40px">B</span></span>～<span class="l"><span style="margin:0 -0.72px">C</span><span style="margin:0 0.67px">}</span><span style="margin:0 0.47px">[</span></span>（<span class="l"><span style="margin:0 -0.06px">0</span><span style="margin:0 0.47px">.</span><span style="margin:0 -0.06px">6</span><span style="margin:0 -0.06px">7</span><span style="margin:0 -0.06px">5</span><span style="margin:0 0.86px">*</span><span style="margin:0 -0.06px">2</span><span style="margin:0 0.79px">+</span><span style="margin:0 -0.06px">1</span><span style="margin:0 0.47px">.</span><span style="margin:0 -0.06px">5</span></span>）<span class="l"><span style="margin:0 0.86px">*</span></span>（<span class="l"><span style="margin:0 -0.06px">3</span><span style="margin:0 0.47px">.</span><span style="margin:0 -0.06px">3</span><span style="margin:0 0.17px">-</span><span style="margin:0 -0.06px">2</span><span style="margin:0 0.47px">.</span><span style="margin:0 -0.06px">9</span><span style="margin:0 -0.06px">5</span></span>）<span class="l"><span style="margin:0 0.79px">+</span><span style="margin:0 -0.06px">1</span><span style="margin:0 0.47px">/</span><span style="margin:0 -0.06px">4</span><span style="margin:0 0.86px">*</span><span style="margin:0 0.67px">{</span><span style="margin:0 -0.42px">R</span><span style="margin:0 0.67px">}</span><span style="margin:0 -0.06px">2</span><span style="margin:0 0.47px">.</span><span style="margin:0 -0.06px">9</span><span style="margin:0 -0.06px">5</span><span style="margin:0 0.86px">*</span><span style="margin:0 -0.06px">2</span><span style="margin:0 0.47px">.</span><span style="margin:0 -0.06px">9</span><span style="margin:0 -0.06px">5</span><span style="margin:0 0.86px">*</span><span style="margin:0 -0.06px">3</span><span style="margin:0 0.47px">.</span><span style="margin:0 -0.06px">1</span><span style="margin:0 -0.06px">4</span><span style="margin:0 0.47px">]</span><span style="margin:0 0.86px">*</span><span style="margin:0 -0.06px">1</span><span style="margin:0 0.47px">/</span><span style="margin:0 -0.06px">2</span><span style="margin:0 0.79px">+</span></span><br>（<span style="font-size:13px;margin:0 -0.5px;line-height:13px">⑦</span>～<span style="font-size:13px;margin:0 -0.5px;line-height:13px">⑧</span>阳台<span class="l"><span style="margin:0 -0.06px">2</span><span style="margin:0 0.47px">.</span><span style="margin:0 -0.06px">4</span><span style="margin:0 0.17px">-</span><span style="margin:0 -0.06px">0</span><span style="margin:0 0.47px">.</span><span style="margin:0 -0.06px">1</span></span>）<span class="l"><span style="margin:0 0.86px">*</span></span>（<span class="l"><span style="margin:0 0.67px">{</span><span style="margin:0 -0.40px">B</span></span>～<span class="l"><span style="margin:0 -0.72px">C</span><span style="margin:0 0.67px">}</span><span style="margin:0 -0.06px">0</span><span style="margin:0 0.47px">.</span><span style="margin:0 -0.06px">3</span><span style="margin:0 0.79px">+</span><span style="margin:0 -0.06px">1</span><span style="margin:0 0.47px">.</span><span style="margin:0 -0.06px">5</span><span style="margin:0 0.79px">+</span><span style="margin:0 -0.06px">0</span><span style="margin:0 0.47px">.</span><span style="margin:0 -0.06px">3</span><span style="margin:0 0.17px">-</span><span style="margin:0 -0.06px">0</span><span style="margin:0 0.47px">.</span><span style="margin:0 -0.06px">1</span><span style="margin:0 0.17px">-</span><span style="margin:0 -0.06px">0</span><span style="margin:0 0.47px">.</span><span style="margin:0 -0.06px">0</span><span style="margin:0 -0.06px">5</span></span>）<span class="l"><span style="margin:0 0.86px">*</span><span style="margin:0 -0.06px">1</span><span style="margin:0 0.47px">/</span><span style="margin:0 -0.06px">2</span><span style="margin:0 0.17px">-</span></span>（露台外<br><span class="l"><span style="margin:0 -0.06px">0</span><span style="margin:0 0.47px">.</span><span style="margin:0 -0.06px">1</span><span style="margin:0 -0.06px">5</span><span style="margin:0 0.79px">+</span><span style="margin:0 -0.06px">0</span><span style="margin:0 0.47px">.</span><span style="margin:0 -0.06px">8</span><span style="margin:0 -0.06px">8</span><span style="margin:0 -0.06px">8</span><span style="margin:0 0.79px">+</span><span style="margin:0 -0.06px">0</span><span style="margin:0 0.47px">.</span><span style="margin:0 -0.06px">1</span></span>）<span class="l"><span style="margin:0 0.86px">*</span></span>（<span class="l"><span style="margin:0 -0.06px">0</span><span style="margin:0 0.47px">.</span><span style="margin:0 -0.06px">3</span><span style="margin:0 0.79px">+</span><span style="margin:0 -0.06px">1</span><span style="margin:0 0.47px">.</span><span style="margin:0 -0.06px">8</span><span style="margin:0 0.79px">+</span><span style="margin:0 -0.06px">0</span><span style="margin:0 0.47px">.</span><span style="margin:0 -0.06px">6</span><span style="margin:0 0.79px">+</span><span style="margin:0 -0.06px">0</span><span style="margin:0 0.47px">.</span><span style="margin:0 -0.06px">1</span></span>）<span class="l"><span style="margin:0 0.17px">-</span><span style="margin:0 0.47px">[</span><span style="margin:0 0.67px">{</span><span style="margin:0 -0.42px">R</span><span style="margin:0 0.67px">}</span><span style="margin:0 -0.06px">6</span><span style="margin:0 0.47px">.</span><span style="margin:0 -0.06px">4</span><span style="margin:0 0.86px">*</span><span style="margin:0 -0.06px">6</span><span style="margin:0 0.47px">.</span><span style="margin:0 -0.06px">4</span><span style="margin:0 0.86px">*</span><span style="margin:0 -0.06px">3</span><span style="margin:0 0.47px">.</span><span style="margin:0 -0.06px">1</span><span style="margin:0 -0.06px">4</span><span style="margin:0 0.86px">*</span><span style="margin:0 -0.06px">3</span><span style="margin:0 -0.06px">4</span><span style="margin:0 0.47px">.</span><span style="margin:0 -0.06px">7</span><span style="margin:0 0.47px">/</span><span style="margin:0 -0.06px">3</span><span style="margin:0 -0.06px">6</span><span style="margin:0 -0.06px">0</span><span style="margin:0 0.17px">-</span></span>（<br><span class="l"><span style="margin:0 -0.06px">1</span><span style="margin:0 0.47px">.</span><span style="margin:0 -0.06px">3</span><span style="margin:0 -0.06px">5</span><span style="margin:0 0.79px">+</span><span style="margin:0 -0.06px">4</span><span style="margin:0 0.47px">.</span><span style="margin:0 -0.06px">0</span><span style="margin:0 -0.06px">6</span><span style="margin:0 -0.06px">2</span><span style="margin:0 0.17px">-</span><span style="margin:0 -0.06px">0</span><span style="margin:0 0.47px">.</span><span style="margin:0 -0.06px">1</span><span style="margin:0 -0.06px">5</span></span>）<span class="l"><span style="margin:0 0.86px">*</span><span style="margin:0 -0.06px">3</span><span style="margin:0 0.47px">.</span><span style="margin:0 -0.06px">6</span><span style="margin:0 -0.06px">4</span><span style="margin:0 0.86px">*</span><span style="margin:0 -0.06px">1</span><span style="margin:0 0.47px">/</span><span style="margin:0 -0.06px">2</span><span style="margin:0 0.47px">]</span></span></div>
<div class="a nw b" style="left:901px;top:471px;width:82px;text-align:right;line-height:13px"><span class="l"><span style="margin:0 -0.06px">8</span><span style="margin:0 -0.06px">9</span><span style="margin:0 -0.06px">9</span><span style="margin:0 0.47px">.</span><span style="margin:0 -0.06px">0</span><span style="margin:0 -0.06px">0</span><span style="margin:0 -0.06px">6</span></span></div>
<div class="a nw b" style="left:213px;top:527px;width:40px;text-align:center;line-height:13px"><span class="l"><span style="margin:0 -0.06px">1</span><span style="margin:0 -0.06px">3</span></span></div>
<div class="a nw b" style="left:256px;top:527px;line-height:13px">二十层</div>
<div class="a nw b" style="left:336px;top:527px;line-height:13px">建筑面积<span class="l">m</span></div>
<div class="a nw b" style="left:417px;top:527px;line-height:13px"><span class="l"><span style="margin:0 -0.06px">9</span><span style="margin:0 -0.06px">0</span><span style="margin:0 -0.06px">6</span><span style="margin:0 0.47px">.</span><span style="margin:0 -0.06px">6</span><span style="margin:0 -0.06px">8</span><span style="margin:0 -0.06px">5</span><span style="margin:0 0.17px">-</span></span>东阳台<span class="l"><span style="margin:0 0.67px">{</span><span style="margin:0 -0.40px">B</span></span>～<span class="l"><span style="margin:0 -0.72px">C</span><span style="margin:0 0.67px">}</span><span style="margin:0 0.47px">[</span></span>（<span class="l"><span style="margin:0 -0.06px">0</span><span style="margin:0 0.47px">.</span><span style="margin:0 -0.06px">6</span><span style="margin:0 -0.06px">7</span><span style="margin:0 -0.06px">5</span><span style="margin:0 0.86px">*</span><span style="margin:0 -0.06px">2</span><span style="margin:0 0.79px">+</span><span style="margin:0 -0.06px">1</span><span style="margin:0 0.47px">.</span><span style="margin:0 -0.06px">5</span></span>）<span class="l"><span style="margin:0 0.86px">*</span></span>（<span class="l"><span style="margin:0 -0.06px">3</span><span style="margin:0 0.47px">.</span><span style="margin:0 -0.06px">3</span><span style="margin:0 0.17px">-</span><span style="margin:0 -0.06px">2</span><span style="margin:0 0.47px">.</span><span style="margin:0 -0.06px">9</span><span style="margin:0 -0.06px">5</span></span>）<span class="l"><span style="margin:0 0.79px">+</span><span style="margin:0 -0.06px">1</span><span style="margin:0 0.47px">/</span><span style="margin:0 -0.06px">4</span><span style="margin:0 0.86px">*</span><span style="margin:0 0.67px">{</span><span style="margin:0 -0.42px">R</span><span style="margin:0 0.67px">}</span><span style="margin:0 -0.06px">2</span><span style="margin:0 0.47px">.</span><span style="margin:0 -0.06px">9</span><span style="margin:0 -0.06px">5</span><span style="margin:0 0.86px">*</span><span style="margin:0 -0.06px">2</span><span style="margin:0 0.47px">.</span><span style="margin:0 -0.06px">9</span><span style="margin:0 -0.06px">5</span><span style="margin:0 0.86px">*</span><span style="margin:0 -0.06px">3</span><span style="margin:0 0.47px">.</span><span style="margin:0 -0.06px">1</span><span style="margin:0 -0.06px">4</span><span style="margin:0 0.47px">]</span><span style="margin:0 0.86px">*</span><span style="margin:0 -0.06px">1</span><span style="margin:0 0.47px">/</span><span style="margin:0 -0.06px">2</span><span style="margin:0 0.79px">+</span></span><br>（<span style="font-size:13px;margin:0 -0.5px;line-height:13px">⑦</span>～<span style="font-size:13px;margin:0 -0.5px;line-height:13px">⑧</span>阳台<span class="l"><span style="margin:0 -0.06px">2</span><span style="margin:0 0.47px">.</span><span style="margin:0 -0.06px">4</span><span style="margin:0 0.17px">-</span><span style="margin:0 -0.06px">0</span><span style="margin:0 0.47px">.</span><span style="margin:0 -0.06px">1</span></span>）<span class="l"><span style="margin:0 0.86px">*</span></span>（<span class="l"><span style="margin:0 0.67px">{</span><span style="margin:0 -0.40px">B</span></span>～<span class="l"><span style="margin:0 -0.72px">C</span><span style="margin:0 0.67px">}</span><span style="margin:0 -0.06px">0</span><span style="margin:0 0.47px">.</span><span style="margin:0 -0.06px">3</span><span style="margin:0 0.79px">+</span><span style="margin:0 -0.06px">1</span><span style="margin:0 0.47px">.</span><span style="margin:0 -0.06px">5</span><span style="margin:0 0.79px">+</span><span style="margin:0 -0.06px">0</span><span style="margin:0 0.47px">.</span><span style="margin:0 -0.06px">3</span><span style="margin:0 0.17px">-</span><span style="margin:0 -0.06px">0</span><span style="margin:0 0.47px">.</span><span style="margin:0 -0.06px">1</span><span style="margin:0 0.17px">-</span><span style="margin:0 -0.06px">0</span><span style="margin:0 0.47px">.</span><span style="margin:0 -0.06px">0</span><span style="margin:0 -0.06px">5</span></span>）<span class="l"><span style="margin:0 0.86px">*</span><span style="margin:0 -0.06px">1</span><span style="margin:0 0.47px">/</span><span style="margin:0 -0.06px">2</span><span style="margin:0 0.17px">-</span></span>（露台外<span class="l"><span style="margin:0 -0.06px">0</span><span style="margin:0 0.47px">.</span><span style="margin:0 -0.06px">6</span><span style="margin:0 0.79px">+</span><span style="margin:0 -0.06px">2</span><span style="margin:0 0.47px">.</span><span style="margin:0 -0.06px">4</span><span style="margin:0 -0.06px">5</span><span style="margin:0 0.79px">+</span><span style="margin:0 -0.06px">0</span><span style="margin:0 0.47px">.</span><span style="margin:0 -0.06px">1</span></span><br>）<span class="l"><span style="margin:0 0.86px">*</span></span>（<span class="l"><span style="margin:0 -0.06px">0</span><span style="margin:0 0.47px">.</span><span style="margin:0 -0.06px">3</span><span style="margin:0 0.79px">+</span><span style="margin:0 -0.06px">1</span><span style="margin:0 0.47px">.</span><span style="margin:0 -0.06px">8</span><span style="margin:0 0.79px">+</span><span style="margin:0 -0.06px">0</span><span style="margin:0 0.47px">.</span><span style="margin:0 -0.06px">6</span><span style="margin:0 0.79px">+</span><span style="margin:0 -0.06px">0</span><span style="margin:0 0.47px">.</span><span style="margin:0 -0.06px">1</span></span>）<span class="l"><span style="margin:0 0.17px">-</span><span style="margin:0 0.47px">[</span><span style="margin:0 0.67px">{</span><span style="margin:0 -0.42px">R</span><span style="margin:0 0.67px">}</span><span style="margin:0 -0.06px">6</span><span style="margin:0 0.47px">.</span><span style="margin:0 -0.06px">4</span><span style="margin:0 0.86px">*</span><span style="margin:0 -0.06px">6</span><span style="margin:0 0.47px">.</span><span style="margin:0 -0.06px">4</span><span style="margin:0 0.86px">*</span><span style="margin:0 -0.06px">3</span><span style="margin:0 0.47px">.</span><span style="margin:0 -0.06px">1</span><span style="margin:0 -0.06px">4</span><span style="margin:0 0.86px">*</span><span style="margin:0 -0.06px">5</span><span style="margin:0 -0.06px">9</span><span style="margin:0 0.47px">.</span><span style="margin:0 -0.06px">5</span><span style="margin:0 0.47px">/</span><span style="margin:0 -0.06px">3</span><span style="margin:0 -0.06px">6</span><span style="margin:0 -0.06px">0</span><span style="margin:0 0.17px">-</span></span>（三角形<span class="l"><span style="margin:0 -0.06px">1</span><span style="margin:0 0.47px">.</span><span style="margin:0 -0.06px">3</span><span style="margin:0 -0.06px">5</span><span style="margin:0 0.79px">+</span><span style="margin:0 -0.06px">2</span><span style="margin:0 0.47px">.</span><span style="margin:0 -0.06px">5</span><span style="margin:0 0.17px">-</span><span style="margin:0 -0.06px">0</span><span style="margin:0 0.47px">.</span><span style="margin:0 -0.06px">6</span></span>）<br><span class="l"><span style="margin:0 0.86px">*</span><span style="margin:0 -0.06px">5</span><span style="margin:0 0.47px">.</span><span style="margin:0 -0.06px">5</span><span style="margin:0 -0.06px">1</span><span style="margin:0 0.86px">*</span><span style="margin:0 -0.06px">1</span><span style="margin:0 0.47px">/</span><span style="margin:0 -0.06px">2</span><span style="margin:0 0.47px">]</span><span style="margin:0 0.79px">+</span></span>（<span style="font-size:13px;margin:0 -0.5px;line-height:13px">⑧</span>外扩<span class="l"><span style="margin:0 -0.06px">0</span><span style="margin:0 0.47px">.</span><span style="margin:0 -0.06px">6</span><span style="margin:0 -0.06px">1</span><span style="margin:0 0.17px">-</span><span style="margin:0 -0.06px">0</span><span style="margin:0 0.47px">.</span><span style="margin:0 -0.06px">1</span></span>）<span class="l"><span style="margin:0 0.86px">*</span><span style="margin:0 -0.06px">3</span><span style="margin:0 0.47px">.</span><span style="margin:0 -0.06px">6</span><span style="margin:0 -0.06px">5</span></span></div>
<div class="a nw b" style="left:901px;top:527px;width:82px;text-align:right;line-height:13px"><span class="l"><span style="margin:0 -0.06px">8</span><span style="margin:0 -0.06px">8</span><span style="margin:0 -0.06px">5</span><span style="margin:0 0.47px">.</span><span style="margin:0 -0.06px">7</span><span style="margin:0 -0.06px">5</span><span style="margin:0 -0.06px">1</span></span></div>
<div class="a nw b" style="left:213px;top:583px;width:40px;text-align:center;line-height:13px"><span class="l"><span style="margin:0 -0.06px">1</span><span style="margin:0 -0.06px">4</span></span></div>
<div class="a nw b" style="left:256px;top:583px;line-height:13px">二十一层</div>
<div class="a nw b" style="left:336px;top:583px;line-height:13px">建筑面积<span class="l">n</span></div>
<div class="a nw b" style="left:417px;top:583px;line-height:13px"><span class="l"><span style="margin:0 -0.06px">9</span><span style="margin:0 -0.06px">0</span><span style="margin:0 -0.06px">6</span><span style="margin:0 0.47px">.</span><span style="margin:0 -0.06px">6</span><span style="margin:0 -0.06px">8</span><span style="margin:0 -0.06px">5</span><span style="margin:0 0.17px">-</span></span>东阳台<span class="l"><span style="margin:0 0.67px">{</span><span style="margin:0 -0.40px">B</span></span>～<span class="l"><span style="margin:0 -0.72px">C</span><span style="margin:0 0.67px">}</span><span style="margin:0 0.47px">[</span></span>（<span class="l"><span style="margin:0 -0.06px">0</span><span style="margin:0 0.47px">.</span><span style="margin:0 -0.06px">6</span><span style="margin:0 -0.06px">7</span><span style="margin:0 -0.06px">5</span><span style="margin:0 0.86px">*</span><span style="margin:0 -0.06px">2</span><span style="margin:0 0.79px">+</span><span style="margin:0 -0.06px">1</span><span style="margin:0 0.47px">.</span><span style="margin:0 -0.06px">5</span></span>）<span class="l"><span style="margin:0 0.86px">*</span></span>（<span class="l"><span style="margin:0 -0.06px">3</span><span style="margin:0 0.47px">.</span><span style="margin:0 -0.06px">3</span><span style="margin:0 0.17px">-</span><span style="margin:0 -0.06px">2</span><span style="margin:0 0.47px">.</span><span style="margin:0 -0.06px">9</span><span style="margin:0 -0.06px">5</span></span>）<span class="l"><span style="margin:0 0.79px">+</span><span style="margin:0 -0.06px">1</span><span style="margin:0 0.47px">/</span><span style="margin:0 -0.06px">4</span><span style="margin:0 0.86px">*</span><span style="margin:0 0.67px">{</span><span style="margin:0 -0.42px">R</span><span style="margin:0 0.67px">}</span><span style="margin:0 -0.06px">2</span><span style="margin:0 0.47px">.</span><span style="margin:0 -0.06px">9</span><span style="margin:0 -0.06px">5</span><span style="margin:0 0.86px">*</span><span style="margin:0 -0.06px">2</span><span style="margin:0 0.47px">.</span><span style="margin:0 -0.06px">9</span><span style="margin:0 -0.06px">5</span><span style="margin:0 0.86px">*</span><span style="margin:0 -0.06px">3</span><span style="margin:0 0.47px">.</span><span style="margin:0 -0.06px">1</span><span style="margin:0 -0.06px">4</span><span style="margin:0 0.47px">]</span><span style="margin:0 0.86px">*</span><span style="margin:0 -0.06px">1</span><span style="margin:0 0.47px">/</span><span style="margin:0 -0.06px">2</span><span style="margin:0 0.79px">+</span></span><br>（<span style="font-size:13px;margin:0 -0.5px;line-height:13px">⑦</span>～<span style="font-size:13px;margin:0 -0.5px;line-height:13px">⑧</span>阳台<span class="l"><span style="margin:0 -0.06px">2</span><span style="margin:0 0.47px">.</span><span style="margin:0 -0.06px">4</span><span style="margin:0 0.17px">-</span><span style="margin:0 -0.06px">0</span><span style="margin:0 0.47px">.</span><span style="margin:0 -0.06px">1</span></span>）<span class="l"><span style="margin:0 0.86px">*</span></span>（<span class="l"><span style="margin:0 0.67px">{</span><span style="margin:0 -0.40px">B</span></span>～<span class="l"><span style="margin:0 -0.72px">C</span><span style="margin:0 0.67px">}</span><span style="margin:0 -0.06px">0</span><span style="margin:0 0.47px">.</span><span style="margin:0 -0.06px">3</span><span style="margin:0 0.79px">+</span><span style="margin:0 -0.06px">1</span><span style="margin:0 0.47px">.</span><span style="margin:0 -0.06px">5</span><span style="margin:0 0.79px">+</span><span style="margin:0 -0.06px">0</span><span style="margin:0 0.47px">.</span><span style="margin:0 -0.06px">3</span><span style="margin:0 0.17px">-</span><span style="margin:0 -0.06px">0</span><span style="margin:0 0.47px">.</span><span style="margin:0 -0.06px">1</span><span style="margin:0 0.17px">-</span><span style="margin:0 -0.06px">0</span><span style="margin:0 0.47px">.</span><span style="margin:0 -0.06px">0</span><span style="margin:0 -0.06px">5</span></span>）<span class="l"><span style="margin:0 0.86px">*</span><span style="margin:0 -0.06px">1</span><span style="margin:0 0.47px">/</span><span style="margin:0 -0.06px">2</span><span style="margin:0 0.17px">-</span></span>（露台外<span class="l"><span style="margin:0 -0.06px">0</span><span style="margin:0 0.47px">.</span><span style="margin:0 -0.06px">4</span><span style="margin:0 0.79px">+</span><span style="margin:0 -0.06px">4</span><span style="margin:0 0.47px">.</span><span style="margin:0 -0.06px">9</span><span style="margin:0 -0.06px">5</span><span style="margin:0 0.79px">+</span><span style="margin:0 -0.06px">0</span><span style="margin:0 0.47px">.</span><span style="margin:0 -0.06px">1</span></span><br>）<span class="l"><span style="margin:0 0.86px">*</span></span>（<span class="l"><span style="margin:0 -0.06px">0</span><span style="margin:0 0.47px">.</span><span style="margin:0 -0.06px">7</span><span style="margin:0 -0.06px">5</span><span style="margin:0 0.79px">+</span><span style="margin:0 -0.06px">1</span><span style="margin:0 0.47px">.</span><span style="margin:0 -0.06px">8</span><span style="margin:0 0.79px">+</span><span style="margin:0 -0.06px">0</span><span style="margin:0 0.47px">.</span><span style="margin:0 -0.06px">1</span><span style="margin:0 -0.06px">5</span><span style="margin:0 0.79px">+</span><span style="margin:0 -0.06px">0</span><span style="margin:0 0.47px">.</span><span style="margin:0 -0.06px">1</span></span>）<span class="l"><span style="margin:0 0.17px">-</span><span style="margin:0 0.47px">[</span><span style="margin:0 0.67px">{</span><span style="margin:0 -0.42px">R</span><span style="margin:0 0.67px">}</span><span style="margin:0 -0.06px">6</span><span style="margin:0 0.47px">.</span><span style="margin:0 -0.06px">4</span><span style="margin:0 0.86px">*</span><span style="margin:0 -0.06px">6</span><span style="margin:0 0.47px">.</span><span style="margin:0 -0.06px">4</span><span style="margin:0 0.86px">*</span><span style="margin:0 -0.06px">3</span><span style="margin:0 0.47px">.</span><span style="margin:0 -0.06px">1</span><span style="margin:0 -0.06px">4</span><span style="margin:0 0.86px">*</span><span style="margin:0 -0.06px">8</span><span style="margin:0 -0.06px">1</span><span style="margin:0 0.47px">.</span><span style="margin:0 -0.06px">5</span><span style="margin:0 0.47px">/</span><span style="margin:0 -0.06px">3</span><span style="margin:0 -0.06px">6</span><span style="margin:0 -0.06px">0</span><span style="margin:0 0.17px">-</span></span>（三角形<span class="l"><span style="margin:0 -0.06px">1</span><span style="margin:0 0.47px">.</span><span style="margin:0 -0.06px">3</span><span style="margin:0 -0.06px">5</span><span style="margin:0 0.17px">-</span><span style="margin:0 -0.06px">0</span><span style="margin:0 0.47px">.</span><span style="margin:0 -0.06px">4</span></span>）<br><span class="l"><span style="margin:0 0.86px">*</span><span style="margin:0 -0.06px">6</span><span style="margin:0 0.47px">.</span><span style="margin:0 -0.06px">3</span><span style="margin:0 -0.06px">3</span><span style="margin:0 0.86px">*</span><span style="margin:0 -0.06px">1</span><span style="margin:0 0.47px">/</span><span style="margin:0 -0.06px">2</span><span style="margin:0 0.47px">]</span><span style="margin:0 0.79px">+</span></span>（<span style="font-size:13px;margin:0 -0.5px;line-height:13px">⑧</span>外扩<span class="l"><span style="margin:0 -0.06px">0</span><span style="margin:0 0.47px">.</span><span style="margin:0 -0.06px">9</span><span style="margin:0 -0.06px">9</span><span style="margin:0 -0.06px">2</span><span style="margin:0 0.17px">-</span><span style="margin:0 -0.06px">0</span><span style="margin:0 0.47px">.</span><span style="margin:0 -0.06px">1</span></span>）<span class="l"><span style="margin:0 0.86px">*</span><span style="margin:0 -0.06px">3</span><span style="margin:0 0.47px">.</span><span style="margin:0 -0.06px">6</span><span style="margin:0 -0.06px">5</span><span style="margin:0 0.17px">-</span><span style="margin:0 0.67px">{</span><span style="margin:0 -0.06px">1</span><span style="margin:0 0.47px">/</span></span><span style="font-size:13px;margin:0 -0.5px;line-height:13px">⑥</span>～<span style="font-size:13px;margin:0 -0.5px;line-height:13px">⑦</span>、<span class="l"><span style="margin:0 -0.06px">1</span><span style="margin:0 0.47px">/</span></span><span style="font-size:13px;margin:0 -0.5px;line-height:13px">⑧</span>～<span class="l"><span style="margin:0 -0.06px">2</span><span style="margin:0 0.47px">/</span></span><span style="font-size:13px;margin:0 -0.5px;line-height:13px">⑧</span><span class="l"><span style="margin:0 0.67px">}</span><span style="margin:0 -0.06px">2</span><span style="margin:0 0.47px">.</span><span style="margin:0 -0.06px">7</span><span style="margin:0 0.86px">*</span></span>（</div>
<div class="a nw b" style="left:901px;top:583px;width:82px;text-align:right;line-height:13px"><span class="l"><span style="margin:0 -0.06px">8</span><span style="margin:0 -0.06px">5</span><span style="margin:0 -0.06px">8</span><span style="margin:0 0.47px">.</span><span style="margin:0 -0.06px">5</span><span style="margin:0 -0.06px">2</span><span style="margin:0 -0.06px">9</span></span></div>
<div class="a" style="left:168px;top:636px;width:1244px;height:1px;background:#d8d8d8"></div>
<div class="a" style="left:168px;top:637px;width:1244px;height:24px;background:#f0f0f0;border-top:1px solid #8a8a8a;border-left:1px solid #a0a0a0;border-bottom:1px solid #8a8a8a"></div>
<div class="a" style="left:169px;top:638px;width:1243px;height:1px;background:#fdfdfd"></div>
<div class="a" style="left:545px;top:638px;width:1px;height:22px;background:#b8b8b8"></div>
<div class="a nw " style="left:177px;top:644px;line-height:14px">上移</div>
<div class="a nw " style="left:219px;top:644px;line-height:14px">下移</div>
<div class="a nw " style="left:258px;top:644px;line-height:14px">增加项目</div>
<div class="a nw " style="left:317px;top:644px;line-height:14px">插入项目</div>
<div class="a nw " style="left:376px;top:644px;line-height:14px">删除项目</div>
<div class="a nw " style="left:434px;top:644px;line-height:14px">增加子项</div>
<div class="a nw " style="left:493px;top:644px;line-height:14px">复制项目</div>
<div class="a nw " style="left:552px;top:644px;line-height:14px">粘贴项目</div>
<div class="a nw " style="left:611px;top:644px;line-height:14px">剪切项目</div>
<div class="a nw " style="left:669px;top:644px;line-height:14px">全部展开</div>
<div class="a nw " style="left:730px;top:644px;line-height:14px">全部收缩</div>
<div class="a" style="left:168px;top:661px;width:1244px;height:1px;background:#ffffff"></div>
<div class="a" style="left:991px;top:663px;width:100px;height:8px;background:#f6f6fc;border:1px solid #707070"></div>
<svg class="a" style="left:995px;top:664px" width="92" height="6"><path d="M2.5 1.5H8.5L5.5 4.5z" fill="#101050"/><path d="M83.5 1.5H89.5L86.5 4.5z" fill="#101050"/><path d="M13 3.5H80" stroke="#101040" stroke-width="1" stroke-dasharray="1 2"/></svg>
<div class="a" style="left:168px;top:673px;width:1244px;height:1px;background:#fafafa"></div>
<div class="a" style="left:547px;top:674px;width:865px;height:3px;background:#f4f4fa"></div>
<div class="a" style="left:547px;top:677px;width:865px;height:293px;background:#fff"></div>
<div class="a" style="left:547px;top:677px;width:865px;height:1px;background:#a8aab8"></div>
<div class="a" style="left:546px;top:677px;width:1px;height:293px;background:#fafafa"></div>
<div class="a" style="left:970px;top:970px;width:442px;height:1px;background:#a0a4b4"></div>
<div class="a" style="left:536px;top:970px;width:876px;height:1px;background:#a0a4b4"></div>
<div class="a" style="left:168px;top:971px;width:1244px;height:1px;background:#f0f0f0"></div>
<div class="a" style="left:230px;top:972px;width:1182px;height:2px;background:#6a6a6a"></div>
<div class="a" style="left:168px;top:673px;width:368px;height:300px;background:#f0f0f0"></div>
<div class="a" style="left:168px;top:673px;width:368px;height:1px;background:#fff"></div>
<div class="a" style="left:168px;top:673px;width:1px;height:300px;background:#fff"></div>
<div class="a" style="left:172px;top:677px;width:363px;height:264px;background:#fff"></div>
<div class="a" style="left:172px;top:677px;width:363px;height:1px;background:#6a6a6a"></div>
<div class="a" style="left:172px;top:677px;width:1px;height:264px;background:#6a6a6a"></div>
<div class="a" style="left:534px;top:677px;width:1px;height:264px;background:#e0e0e0"></div>
<div class="a" style="left:518px;top:678px;width:16px;height:263px;background:linear-gradient(90deg,#ececec,#f6f6f6,#ececec)"></div>
<svg class="a" style="left:523px;top:685px" width="7" height="4"><path d="M0 4L3.5 0L7 4z" fill="#404040"/></svg>
<svg class="a" style="left:523px;top:931px" width="7" height="4"><path d="M0 0L3.5 4L7 0z" fill="#404040"/></svg>
<div class="a" style="left:518px;top:803px;width:15px;height:119px;background:linear-gradient(90deg,#fafafa,#e6e6e6 60%,#d0d0d0);border:1px solid #9a9a9a;border-radius:2px"></div>
<svg class="a" style="left:522px;top:857px" width="8" height="7"><path d="M0 0.5H8M0 3.5H8M0 6.5H8" stroke="#555" stroke-width="1"/></svg>
<div class="a" style="left:181px;top:678px;width:1px;height:216px;background:repeating-linear-gradient(#808080 0 1px,transparent 1px 2px)"></div>
<div class="a" style="left:200px;top:678px;width:1px;height:104px;background:repeating-linear-gradient(#808080 0 1px,transparent 1px 2px)"></div>
<div class="a" style="left:200px;top:798px;width:1px;height:48px;background:repeating-linear-gradient(#808080 0 1px,transparent 1px 2px)"></div>
<div class="a" style="left:200px;top:862px;width:1px;height:16px;background:repeating-linear-gradient(#808080 0 1px,transparent 1px 2px)"></div>
<div class="a" style="left:200px;top:894px;width:1px;height:32px;background:repeating-linear-gradient(#808080 0 1px,transparent 1px 2px)"></div>
<div class="a" style="left:196px;top:682px;width:9px;height:9px;border:1px solid #808080;background:#fff"></div>
<div class="a" style="left:198px;top:686px;width:5px;height:1px;background:#000"></div>
<div class="a" style="left:200px;top:684px;width:1px;height:5px;background:#000"></div>
<div class="a" style="left:206px;top:686px;width:5px;height:1px;background:repeating-linear-gradient(90deg,#808080 0 1px,transparent 1px 2px)"></div>
<div class="a" style="left:211px;top:682px;line-height:0"><svg width="15" height="12" viewBox="0 0 15 12"><path d="M0.5 11.5V2Q0.5 0.5 2 0.5H5L6 1.5H11.5Q13 1.5 13 3V11.5z" fill="#fbeeb0" stroke="#c8a430"/><path d="M0.5 4.5H14.5V11.5H0.5z" fill="url(#lf)" stroke="#c8a430"/><defs><linearGradient id="lf" x1="0" y1="0" x2="0" y2="1"><stop offset="0" stop-color="#fff0a0"/><stop offset="1" stop-color="#f4d050"/></linearGradient></defs></svg></div>
<div class="a nw " style="left:232px;top:679px;line-height:14px;letter-spacing:0.3px">0402</div>
<div class="a nw " style="left:262px;top:680px;line-height:14px">道路工程</div>
<div class="a" style="left:196px;top:698px;width:9px;height:9px;border:1px solid #808080;background:#fff"></div>
<div class="a" style="left:198px;top:702px;width:5px;height:1px;background:#000"></div>
<div class="a" style="left:200px;top:700px;width:1px;height:5px;background:#000"></div>
<div class="a" style="left:206px;top:702px;width:5px;height:1px;background:repeating-linear-gradient(90deg,#808080 0 1px,transparent 1px 2px)"></div>
<div class="a" style="left:211px;top:698px;line-height:0"><svg width="15" height="12" viewBox="0 0 15 12"><path d="M0.5 11.5V2Q0.5 0.5 2 0.5H5L6 1.5H11.5Q13 1.5 13 3V11.5z" fill="#fbeeb0" stroke="#c8a430"/><path d="M0.5 4.5H14.5V11.5H0.5z" fill="url(#lf)" stroke="#c8a430"/><defs><linearGradient id="lf" x1="0" y1="0" x2="0" y2="1"><stop offset="0" stop-color="#fff0a0"/><stop offset="1" stop-color="#f4d050"/></linearGradient></defs></svg></div>
<div class="a nw " style="left:232px;top:695px;line-height:14px;letter-spacing:0.3px">0403</div>
<div class="a nw " style="left:262px;top:696px;line-height:14px">桥涵护岸工程</div>
<div class="a" style="left:196px;top:714px;width:9px;height:9px;border:1px solid #808080;background:#fff"></div>
<div class="a" style="left:198px;top:718px;width:5px;height:1px;background:#000"></div>
<div class="a" style="left:200px;top:716px;width:1px;height:5px;background:#000"></div>
<div class="a" style="left:206px;top:718px;width:5px;height:1px;background:repeating-linear-gradient(90deg,#808080 0 1px,transparent 1px 2px)"></div>
<div class="a" style="left:211px;top:714px;line-height:0"><svg width="15" height="12" viewBox="0 0 15 12"><path d="M0.5 11.5V2Q0.5 0.5 2 0.5H5L6 1.5H11.5Q13 1.5 13 3V11.5z" fill="#fbeeb0" stroke="#c8a430"/><path d="M0.5 4.5H14.5V11.5H0.5z" fill="url(#lf)" stroke="#c8a430"/><defs><linearGradient id="lf" x1="0" y1="0" x2="0" y2="1"><stop offset="0" stop-color="#fff0a0"/><stop offset="1" stop-color="#f4d050"/></linearGradient></defs></svg></div>
<div class="a nw " style="left:232px;top:711px;line-height:14px;letter-spacing:0.3px">0404</div>
<div class="a nw " style="left:262px;top:712px;line-height:14px">隧道工程</div>
<div class="a" style="left:196px;top:730px;width:9px;height:9px;border:1px solid #808080;background:#fff"></div>
<div class="a" style="left:198px;top:734px;width:5px;height:1px;background:#000"></div>
<div class="a" style="left:200px;top:732px;width:1px;height:5px;background:#000"></div>
<div class="a" style="left:206px;top:734px;width:5px;height:1px;background:repeating-linear-gradient(90deg,#808080 0 1px,transparent 1px 2px)"></div>
<div class="a" style="left:211px;top:730px;line-height:0"><svg width="15" height="12" viewBox="0 0 15 12"><path d="M0.5 11.5V2Q0.5 0.5 2 0.5H5L6 1.5H11.5Q13 1.5 13 3V11.5z" fill="#fbeeb0" stroke="#c8a430"/><path d="M0.5 4.5H14.5V11.5H0.5z" fill="url(#lf)" stroke="#c8a430"/><defs><linearGradient id="lf" x1="0" y1="0" x2="0" y2="1"><stop offset="0" stop-color="#fff0a0"/><stop offset="1" stop-color="#f4d050"/></linearGradient></defs></svg></div>
<div class="a nw " style="left:232px;top:727px;line-height:14px;letter-spacing:0.3px">0405</div>
<div class="a nw " style="left:262px;top:728px;line-height:14px">市政管网工程</div>
<div class="a" style="left:196px;top:746px;width:9px;height:9px;border:1px solid #808080;background:#fff"></div>
<div class="a" style="left:198px;top:750px;width:5px;height:1px;background:#000"></div>
<div class="a" style="left:200px;top:748px;width:1px;height:5px;background:#000"></div>
<div class="a" style="left:206px;top:750px;width:5px;height:1px;background:repeating-linear-gradient(90deg,#808080 0 1px,transparent 1px 2px)"></div>
<div class="a" style="left:211px;top:746px;line-height:0"><svg width="15" height="12" viewBox="0 0 15 12"><path d="M0.5 11.5V2Q0.5 0.5 2 0.5H5L6 1.5H11.5Q13 1.5 13 3V11.5z" fill="#fbeeb0" stroke="#c8a430"/><path d="M0.5 4.5H14.5V11.5H0.5z" fill="url(#lf)" stroke="#c8a430"/><defs><linearGradient id="lf" x1="0" y1="0" x2="0" y2="1"><stop offset="0" stop-color="#fff0a0"/><stop offset="1" stop-color="#f4d050"/></linearGradient></defs></svg></div>
<div class="a nw " style="left:232px;top:743px;line-height:14px;letter-spacing:0.3px">0406</div>
<div class="a nw " style="left:262px;top:744px;line-height:14px">地铁工程</div>
<div class="a" style="left:196px;top:762px;width:9px;height:9px;border:1px solid #808080;background:#fff"></div>
<div class="a" style="left:198px;top:766px;width:5px;height:1px;background:#000"></div>
<div class="a" style="left:200px;top:764px;width:1px;height:5px;background:#000"></div>
<div class="a" style="left:206px;top:766px;width:5px;height:1px;background:repeating-linear-gradient(90deg,#808080 0 1px,transparent 1px 2px)"></div>
<div class="a" style="left:211px;top:762px;line-height:0"><svg width="15" height="12" viewBox="0 0 15 12"><path d="M0.5 11.5V2Q0.5 0.5 2 0.5H5L6 1.5H11.5Q13 1.5 13 3V11.5z" fill="#fbeeb0" stroke="#c8a430"/><path d="M0.5 4.5H14.5V11.5H0.5z" fill="url(#lf)" stroke="#c8a430"/><defs><linearGradient id="lf" x1="0" y1="0" x2="0" y2="1"><stop offset="0" stop-color="#fff0a0"/><stop offset="1" stop-color="#f4d050"/></linearGradient></defs></svg></div>
<div class="a nw " style="left:232px;top:759px;line-height:14px;letter-spacing:0.3px">0407</div>
<div class="a nw " style="left:262px;top:760px;line-height:14px">钢筋工程</div>
<div class="a" style="left:196px;top:778px;width:9px;height:9px;border:1px solid #808080;background:#fff"></div>
<div class="a" style="left:198px;top:782px;width:5px;height:1px;background:#000"></div>
<div class="a" style="left:200px;top:780px;width:1px;height:5px;background:#000"></div>
<div class="a" style="left:206px;top:782px;width:5px;height:1px;background:repeating-linear-gradient(90deg,#808080 0 1px,transparent 1px 2px)"></div>
<div class="a" style="left:211px;top:778px;line-height:0"><svg width="15" height="12" viewBox="0 0 15 12"><path d="M0.5 11.5V2Q0.5 0.5 2 0.5H5L6 1.5H11.5Q13 1.5 13 3V11.5z" fill="#fbeeb0" stroke="#c8a430"/><path d="M0.5 4.5H14.5V11.5H0.5z" fill="url(#lf)" stroke="#c8a430"/><defs><linearGradient id="lf" x1="0" y1="0" x2="0" y2="1"><stop offset="0" stop-color="#fff0a0"/><stop offset="1" stop-color="#f4d050"/></linearGradient></defs></svg></div>
<div class="a nw " style="left:232px;top:775px;line-height:14px;letter-spacing:0.3px">0408</div>
<div class="a nw " style="left:262px;top:776px;line-height:14px">拆除工程</div>
<div class="a" style="left:177px;top:794px;width:9px;height:9px;border:1px solid #808080;background:#fff"></div>
<div class="a" style="left:179px;top:798px;width:5px;height:1px;background:#000"></div>
<div class="a" style="left:187px;top:798px;width:5px;height:1px;background:repeating-linear-gradient(90deg,#808080 0 1px,transparent 1px 2px)"></div>
<div class="a" style="left:192px;top:794px;line-height:0"><svg width="15" height="12" viewBox="0 0 15 12"><path d="M0.5 11.5V2Q0.5 0.5 2 0.5H5L6 1.5H11.5Q13 1.5 13 3V11.5z" fill="#fbeeb0" stroke="#c8a430"/><path d="M0.5 4.5H14.5V11.5H0.5z" fill="url(#lf)" stroke="#c8a430"/><defs><linearGradient id="lf" x1="0" y1="0" x2="0" y2="1"><stop offset="0" stop-color="#fff0a0"/><stop offset="1" stop-color="#f4d050"/></linearGradient></defs></svg></div>
<div class="a nw " style="left:213px;top:791px;line-height:14px">05</div>
<div class="a nw " style="left:234px;top:792px;line-height:14px">园林绿化工程</div>
<div class="a" style="left:196px;top:810px;width:9px;height:9px;border:1px solid #808080;background:#fff"></div>
<div class="a" style="left:198px;top:814px;width:5px;height:1px;background:#000"></div>
<div class="a" style="left:200px;top:812px;width:1px;height:5px;background:#000"></div>
<div class="a" style="left:206px;top:814px;width:5px;height:1px;background:repeating-linear-gradient(90deg,#808080 0 1px,transparent 1px 2px)"></div>
<div class="a" style="left:211px;top:810px;line-height:0"><svg width="15" height="12" viewBox="0 0 15 12"><path d="M0.5 11.5V2Q0.5 0.5 2 0.5H5L6 1.5H11.5Q13 1.5 13 3V11.5z" fill="#fbeeb0" stroke="#c8a430"/><path d="M0.5 4.5H14.5V11.5H0.5z" fill="url(#lf)" stroke="#c8a430"/><defs><linearGradient id="lf" x1="0" y1="0" x2="0" y2="1"><stop offset="0" stop-color="#fff0a0"/><stop offset="1" stop-color="#f4d050"/></linearGradient></defs></svg></div>
<div class="a nw " style="left:232px;top:807px;line-height:14px;letter-spacing:0.3px">0501</div>
<div class="a nw " style="left:262px;top:808px;line-height:14px">绿化工程</div>
<div class="a" style="left:196px;top:826px;width:9px;height:9px;border:1px solid #808080;background:#fff"></div>
<div class="a" style="left:198px;top:830px;width:5px;height:1px;background:#000"></div>
<div class="a" style="left:200px;top:828px;width:1px;height:5px;background:#000"></div>
<div class="a" style="left:206px;top:830px;width:5px;height:1px;background:repeating-linear-gradient(90deg,#808080 0 1px,transparent 1px 2px)"></div>
<div class="a" style="left:211px;top:826px;line-height:0"><svg width="15" height="12" viewBox="0 0 15 12"><path d="M0.5 11.5V2Q0.5 0.5 2 0.5H5L6 1.5H11.5Q13 1.5 13 3V11.5z" fill="#fbeeb0" stroke="#c8a430"/><path d="M0.5 4.5H14.5V11.5H0.5z" fill="url(#lf)" stroke="#c8a430"/><defs><linearGradient id="lf" x1="0" y1="0" x2="0" y2="1"><stop offset="0" stop-color="#fff0a0"/><stop offset="1" stop-color="#f4d050"/></linearGradient></defs></svg></div>
<div class="a nw " style="left:232px;top:823px;line-height:14px;letter-spacing:0.3px">0502</div>
<div class="a nw " style="left:262px;top:824px;line-height:14px">园路、园桥、假山工程</div>
<div class="a" style="left:196px;top:842px;width:9px;height:9px;border:1px solid #808080;background:#fff"></div>
<div class="a" style="left:198px;top:846px;width:5px;height:1px;background:#000"></div>
<div class="a" style="left:200px;top:844px;width:1px;height:5px;background:#000"></div>
<div class="a" style="left:206px;top:846px;width:5px;height:1px;background:repeating-linear-gradient(90deg,#808080 0 1px,transparent 1px 2px)"></div>
<div class="a" style="left:211px;top:842px;line-height:0"><svg width="15" height="12" viewBox="0 0 15 12"><path d="M0.5 11.5V2Q0.5 0.5 2 0.5H5L6 1.5H11.5Q13 1.5 13 3V11.5z" fill="#fbeeb0" stroke="#c8a430"/><path d="M0.5 4.5H14.5V11.5H0.5z" fill="url(#lf)" stroke="#c8a430"/><defs><linearGradient id="lf" x1="0" y1="0" x2="0" y2="1"><stop offset="0" stop-color="#fff0a0"/><stop offset="1" stop-color="#f4d050"/></linearGradient></defs></svg></div>
<div class="a nw " style="left:232px;top:839px;line-height:14px;letter-spacing:0.3px">0503</div>
<div class="a nw " style="left:262px;top:840px;line-height:14px">园林景观工程</div>
<div class="a" style="left:177px;top:858px;width:9px;height:9px;border:1px solid #808080;background:#fff"></div>
<div class="a" style="left:179px;top:862px;width:5px;height:1px;background:#000"></div>
<div class="a" style="left:187px;top:862px;width:5px;height:1px;background:repeating-linear-gradient(90deg,#808080 0 1px,transparent 1px 2px)"></div>
<div class="a" style="left:192px;top:858px;line-height:0"><svg width="15" height="12" viewBox="0 0 15 12"><path d="M0.5 11.5V2Q0.5 0.5 2 0.5H5L6 1.5H11.5Q13 1.5 13 3V11.5z" fill="#fbeeb0" stroke="#c8a430"/><path d="M0.5 4.5H14.5V11.5H0.5z" fill="url(#lf)" stroke="#c8a430"/><defs><linearGradient id="lf" x1="0" y1="0" x2="0" y2="1"><stop offset="0" stop-color="#fff0a0"/><stop offset="1" stop-color="#f4d050"/></linearGradient></defs></svg></div>
<div class="a nw " style="left:213px;top:855px;line-height:14px">06</div>
<div class="a nw " style="left:234px;top:856px;line-height:14px">矿山工程</div>
<div class="a" style="left:196px;top:874px;width:9px;height:9px;border:1px solid #808080;background:#fff"></div>
<div class="a" style="left:198px;top:878px;width:5px;height:1px;background:#000"></div>
<div class="a" style="left:200px;top:876px;width:1px;height:5px;background:#000"></div>
<div class="a" style="left:206px;top:878px;width:5px;height:1px;background:repeating-linear-gradient(90deg,#808080 0 1px,transparent 1px 2px)"></div>
<div class="a" style="left:211px;top:874px;line-height:0"><svg width="15" height="12" viewBox="0 0 15 12"><path d="M0.5 11.5V2Q0.5 0.5 2 0.5H5L6 1.5H11.5Q13 1.5 13 3V11.5z" fill="#fbeeb0" stroke="#c8a430"/><path d="M0.5 4.5H14.5V11.5H0.5z" fill="url(#lf)" stroke="#c8a430"/><defs><linearGradient id="lf" x1="0" y1="0" x2="0" y2="1"><stop offset="0" stop-color="#fff0a0"/><stop offset="1" stop-color="#f4d050"/></linearGradient></defs></svg></div>
<div class="a nw " style="left:232px;top:871px;line-height:14px;letter-spacing:0.3px">0601</div>
<div class="a nw " style="left:262px;top:872px;line-height:14px">露天工程</div>
<div class="a" style="left:177px;top:890px;width:9px;height:9px;border:1px solid #808080;background:#fff"></div>
<div class="a" style="left:179px;top:894px;width:5px;height:1px;background:#000"></div>
<div class="a" style="left:187px;top:894px;width:5px;height:1px;background:repeating-linear-gradient(90deg,#808080 0 1px,transparent 1px 2px)"></div>
<div class="a" style="left:192px;top:890px;line-height:0"><svg width="15" height="12" viewBox="0 0 15 12"><path d="M0.5 11.5V2Q0.5 0.5 2 0.5H5L6 1.5H11.5Q13 1.5 13 3V11.5z" fill="#fbeeb0" stroke="#c8a430"/><path d="M0.5 4.5H14.5V11.5H0.5z" fill="url(#lf)" stroke="#c8a430"/><defs><linearGradient id="lf" x1="0" y1="0" x2="0" y2="1"><stop offset="0" stop-color="#fff0a0"/><stop offset="1" stop-color="#f4d050"/></linearGradient></defs></svg></div>
<div class="a nw " style="left:213px;top:887px;line-height:14px">99</div>
<div class="a nw " style="left:234px;top:888px;line-height:14px">措施清单</div>
<div class="a" style="left:196px;top:906px;width:9px;height:9px;border:1px solid #808080;background:#fff"></div>
<div class="a" style="left:198px;top:910px;width:5px;height:1px;background:#000"></div>
<div class="a" style="left:200px;top:908px;width:1px;height:5px;background:#000"></div>
<div class="a" style="left:206px;top:910px;width:5px;height:1px;background:repeating-linear-gradient(90deg,#808080 0 1px,transparent 1px 2px)"></div>
<div class="a" style="left:211px;top:906px;line-height:0"><svg width="16" height="12" viewBox="0 0 16 12"><path d="M0.5 11.5V2Q0.5 0.5 2 0.5H5L6 1.5H11.5Q13 1.5 13 3V5" fill="#fbeeb0" stroke="#c8a430"/><path d="M0.5 11.5L3 5.5H15.5L13 11.5z" fill="url(#lf)" stroke="#c8a430"/></svg></div>
<div class="a" style="left:230px;top:902px;width:82px;height:15px;background:#8080f0"></div>
<div class="a nw " style="left:232px;top:903px;line-height:14px;letter-spacing:0.3px">9901</div>
<div class="a nw " style="left:262px;top:904px;line-height:14px">措施清单</div>
<div class="a" style="left:196px;top:922px;width:9px;height:9px;border:1px solid #808080;background:#fff"></div>
<div class="a" style="left:198px;top:926px;width:5px;height:1px;background:#000"></div>
<div class="a" style="left:200px;top:924px;width:1px;height:5px;background:#000"></div>
<div class="a" style="left:206px;top:926px;width:5px;height:1px;background:repeating-linear-gradient(90deg,#808080 0 1px,transparent 1px 2px)"></div>
<div class="a" style="left:211px;top:922px;line-height:0"><svg width="15" height="12" viewBox="0 0 15 12"><path d="M0.5 11.5V2Q0.5 0.5 2 0.5H5L6 1.5H11.5Q13 1.5 13 3V11.5z" fill="#fbeeb0" stroke="#c8a430"/><path d="M0.5 4.5H14.5V11.5H0.5z" fill="url(#lf)" stroke="#c8a430"/><defs><linearGradient id="lf" x1="0" y1="0" x2="0" y2="1"><stop offset="0" stop-color="#fff0a0"/><stop offset="1" stop-color="#f4d050"/></linearGradient></defs></svg></div>
<div class="a nw " style="left:232px;top:919px;line-height:14px;letter-spacing:0.3px">9902</div>
<div class="a nw " style="left:262px;top:920px;line-height:14px">其他项目</div>
<div class="a" style="left:171px;top:943px;width:364px;height:28px;border:1px solid #a8a8a8;background:#f0f0f0"></div>
<div class="a nw " style="left:179px;top:952px;line-height:14px">查询:</div>
<div class="a" style="left:211px;top:948px;width:47px;height:19px;background:#fff;border-top:2px solid #808080;border-left:2px solid #808080;border-bottom:1px solid #f0f0f0;border-right:1px solid #f0f0f0"></div>
<div class="a nw " style="left:214px;top:952px;line-height:14px">编号</div>
<div class="a" style="left:241px;top:950px;width:16px;height:16px;background:#f0f0f0;border-top:1px solid #fff;border-left:1px solid #fff;border-right:1px solid #808080;border-bottom:1px solid #808080"></div>
<svg class="a" style="left:245px;top:956px" width="8" height="4"><path d="M0 0H8L4 4z" fill="#000"/></svg>
<div class="a" style="left:263px;top:948px;width:191px;height:19px;background:#fff;border-top:2px solid #808080;border-left:2px solid #808080;border-bottom:1px solid #f0f0f0;border-right:1px solid #f0f0f0"></div>
<div class="a" style="left:168px;top:974px;width:1244px;height:20px;background:#f0f0f0"></div>
<div class="a nw " style="left:175px;top:979px;line-height:14px">清单导航</div>
<div class="a" style="left:170px;top:992px;width:60px;height:2px;background:#6a6a6a"></div>
<div class="a nw" style="left:230px;top:974px;width:59px;height:17px;border-left:1px solid #a0a0a0;border-top:0;border-right:2px solid #707070;border-bottom:2px solid #707070;border-bottom-right-radius:2px;background:#f0f0f0;padding:3px 0 0 4px;line-height:14px">定额导航</div>
<div class="a nw" style="left:289px;top:974px;width:48px;height:17px;border-left:1px solid #a0a0a0;border-top:0;border-right:2px solid #707070;border-bottom:2px solid #707070;border-bottom-right-radius:2px;background:#f0f0f0;padding:3px 0 0 4px;line-height:14px">构件库</div>
<div class="a nw" style="left:337px;top:974px;width:60px;height:17px;border-left:1px solid #a0a0a0;border-top:0;border-right:2px solid #707070;border-bottom:2px solid #707070;border-bottom-right-radius:2px;background:#f0f0f0;padding:3px 0 0 4px;line-height:14px">虚拟键盘</div>
<div class="a" style="left:537px;top:774px;width:8px;height:100px;background:#f6f6fc;border:1px solid #707070"></div>
<svg class="a" style="left:538px;top:780px" width="6" height="90"><path d="M4.5 2L1.5 5L4.5 8z" fill="#101050"/><path d="M4.5 82L1.5 85L4.5 88z" fill="#101050"/><path d="M3.5 12V78" stroke="#101040" stroke-width="1" stroke-dasharray="1 2"/></svg>
<div class="a" style="left:547px;top:677px;width:410px;height:293px;background:#fff"></div>
<div class="a" style="left:547px;top:677px;width:1px;height:293px;background:#808080"></div>
<div class="a" style="left:547px;top:677px;width:410px;height:1px;background:#a0a0a0"></div>
<div class="a nw" style="left:548px;top:678px;width:30px;height:20px;background:linear-gradient(#ffffff,#f4f4f4 50%,#e6e6e6);text-align:center;line-height:22px;">序号</div>
<div class="a nw" style="left:579px;top:678px;width:80px;height:20px;background:linear-gradient(#c8d0a8,#f0b040 60%,#f09818);text-align:center;line-height:22px;font-weight:bold">编号</div>
<div class="a nw" style="left:660px;top:678px;width:257px;height:20px;background:linear-gradient(#ffffff,#f4f4f4 50%,#e6e6e6);text-align:center;line-height:22px;">名称</div>
<div class="a nw" style="left:918px;top:678px;width:39px;height:20px;background:linear-gradient(#ffffff,#f4f4f4 50%,#e6e6e6);text-align:center;line-height:22px;">单位</div>
<div class="a" style="left:578px;top:678px;width:1px;height:20px;background:#707070"></div>
<div class="a" style="left:659px;top:678px;width:1px;height:20px;background:#707070"></div>
<div class="a" style="left:917px;top:678px;width:1px;height:20px;background:#707070"></div>
<div class="a" style="left:957px;top:678px;width:1px;height:20px;background:#707070"></div>
<div class="a" style="left:547px;top:698px;width:411px;height:1px;background:#606060"></div>
<div class="a nw" style="left:548px;top:699px;width:30px;height:20px;background:linear-gradient(#c8d0a8,#f0b040 60%,#f09818);text-align:center;line-height:20px;font-weight:bold">1</div>
<div class="a nw" style="left:579px;top:699px;width:80px;text-align:center;line-height:20px;letter-spacing:0.3px">990101001</div>
<div class="a nw " style="left:662px;top:703px;line-height:14px">环境保护</div>
<div class="a nw" style="left:918px;top:699px;width:39px;text-align:center;line-height:22px">项</div>
<div class="a" style="left:547px;top:719px;width:411px;height:1px;background:#b4b4b4"></div>
<div class="a" style="left:578px;top:699px;width:1px;height:20px;background:#707070"></div>
<div class="a" style="left:659px;top:699px;width:1px;height:20px;background:#c8c8c8"></div>
<div class="a" style="left:917px;top:699px;width:1px;height:20px;background:#b0b0b0"></div>
<div class="a" style="left:957px;top:699px;width:1px;height:20px;background:#b0b0b0"></div>
<div class="a nw" style="left:548px;top:720px;width:30px;height:20px;background:linear-gradient(#ffffff,#f2f2f2 50%,#e4e4e4);text-align:center;line-height:20px;">2</div>
<div class="a nw" style="left:579px;top:720px;width:80px;text-align:center;line-height:20px;letter-spacing:0.3px">990101002</div>
<div class="a nw " style="left:662px;top:724px;line-height:14px">文明施工</div>
<div class="a nw" style="left:918px;top:720px;width:39px;text-align:center;line-height:22px">项</div>
<div class="a" style="left:547px;top:740px;width:411px;height:1px;background:#b4b4b4"></div>
<div class="a" style="left:578px;top:720px;width:1px;height:20px;background:#707070"></div>
<div class="a" style="left:659px;top:720px;width:1px;height:20px;background:#c8c8c8"></div>
<div class="a" style="left:917px;top:720px;width:1px;height:20px;background:#b0b0b0"></div>
<div class="a" style="left:957px;top:720px;width:1px;height:20px;background:#b0b0b0"></div>
<div class="a nw" style="left:548px;top:741px;width:30px;height:20px;background:linear-gradient(#ffffff,#f2f2f2 50%,#e4e4e4);text-align:center;line-height:20px;">3</div>
<div class="a nw" style="left:579px;top:741px;width:80px;text-align:center;line-height:20px;letter-spacing:0.3px">990101003</div>
<div class="a nw " style="left:662px;top:745px;line-height:14px">安全施工</div>
<div class="a nw" style="left:918px;top:741px;width:39px;text-align:center;line-height:22px">项</div>
<div class="a" style="left:547px;top:761px;width:411px;height:1px;background:#b4b4b4"></div>
<div class="a" style="left:578px;top:741px;width:1px;height:20px;background:#707070"></div>
<div class="a" style="left:659px;top:741px;width:1px;height:20px;background:#c8c8c8"></div>
<div class="a" style="left:917px;top:741px;width:1px;height:20px;background:#b0b0b0"></div>
<div class="a" style="left:957px;top:741px;width:1px;height:20px;background:#b0b0b0"></div>
<div class="a nw" style="left:548px;top:762px;width:30px;height:20px;background:linear-gradient(#ffffff,#f2f2f2 50%,#e4e4e4);text-align:center;line-height:20px;">4</div>
<div class="a nw" style="left:579px;top:762px;width:80px;text-align:center;line-height:20px;letter-spacing:0.3px">990101004</div>
<div class="a nw " style="left:662px;top:766px;line-height:14px">临时设施</div>
<div class="a nw" style="left:918px;top:762px;width:39px;text-align:center;line-height:22px">项</div>
<div class="a" style="left:547px;top:782px;width:411px;height:1px;background:#b4b4b4"></div>
<div class="a" style="left:578px;top:762px;width:1px;height:20px;background:#707070"></div>
<div class="a" style="left:659px;top:762px;width:1px;height:20px;background:#c8c8c8"></div>
<div class="a" style="left:917px;top:762px;width:1px;height:20px;background:#b0b0b0"></div>
<div class="a" style="left:957px;top:762px;width:1px;height:20px;background:#b0b0b0"></div>
<div class="a nw" style="left:548px;top:783px;width:30px;height:20px;background:linear-gradient(#ffffff,#f2f2f2 50%,#e4e4e4);text-align:center;line-height:20px;">5</div>
<div class="a nw" style="left:579px;top:783px;width:80px;text-align:center;line-height:20px;letter-spacing:0.3px">990101005</div>
<div class="a nw " style="left:662px;top:787px;line-height:14px">夜间施工</div>
<div class="a nw" style="left:918px;top:783px;width:39px;text-align:center;line-height:22px">项</div>
<div class="a" style="left:547px;top:803px;width:411px;height:1px;background:#b4b4b4"></div>
<div class="a" style="left:578px;top:783px;width:1px;height:20px;background:#707070"></div>
<div class="a" style="left:659px;top:783px;width:1px;height:20px;background:#c8c8c8"></div>
<div class="a" style="left:917px;top:783px;width:1px;height:20px;background:#b0b0b0"></div>
<div class="a" style="left:957px;top:783px;width:1px;height:20px;background:#b0b0b0"></div>
<div class="a nw" style="left:548px;top:804px;width:30px;height:20px;background:linear-gradient(#ffffff,#f2f2f2 50%,#e4e4e4);text-align:center;line-height:20px;">6</div>
<div class="a nw" style="left:579px;top:804px;width:80px;text-align:center;line-height:20px;letter-spacing:0.3px">990101006</div>
<div class="a nw " style="left:662px;top:808px;line-height:14px">二次搬运</div>
<div class="a nw" style="left:918px;top:804px;width:39px;text-align:center;line-height:22px">项</div>
<div class="a" style="left:547px;top:824px;width:411px;height:1px;background:#b4b4b4"></div>
<div class="a" style="left:578px;top:804px;width:1px;height:20px;background:#707070"></div>
<div class="a" style="left:659px;top:804px;width:1px;height:20px;background:#c8c8c8"></div>
<div class="a" style="left:917px;top:804px;width:1px;height:20px;background:#b0b0b0"></div>
<div class="a" style="left:957px;top:804px;width:1px;height:20px;background:#b0b0b0"></div>
<div class="a nw" style="left:548px;top:825px;width:30px;height:20px;background:linear-gradient(#ffffff,#f2f2f2 50%,#e4e4e4);text-align:center;line-height:20px;">7</div>
<div class="a nw" style="left:579px;top:825px;width:80px;text-align:center;line-height:20px;letter-spacing:0.3px">990101007</div>
<div class="a nw " style="left:662px;top:829px;line-height:14px">大型机械设备进出场及安拆</div>
<div class="a nw" style="left:918px;top:825px;width:39px;text-align:center;line-height:22px">项</div>
<div class="a" style="left:547px;top:845px;width:411px;height:1px;background:#b4b4b4"></div>
<div class="a" style="left:578px;top:825px;width:1px;height:20px;background:#707070"></div>
<div class="a" style="left:659px;top:825px;width:1px;height:20px;background:#c8c8c8"></div>
<div class="a" style="left:917px;top:825px;width:1px;height:20px;background:#b0b0b0"></div>
<div class="a" style="left:957px;top:825px;width:1px;height:20px;background:#b0b0b0"></div>
<div class="a nw" style="left:548px;top:846px;width:30px;height:20px;background:linear-gradient(#ffffff,#f2f2f2 50%,#e4e4e4);text-align:center;line-height:20px;">8</div>
<div class="a nw" style="left:579px;top:846px;width:80px;text-align:center;line-height:20px;letter-spacing:0.3px">990101008</div>
<div class="a nw " style="left:662px;top:850px;line-height:14px">混凝土、钢筋混凝土模板及支架</div>
<div class="a nw" style="left:918px;top:846px;width:39px;text-align:center;line-height:22px">项</div>
<div class="a" style="left:547px;top:866px;width:411px;height:1px;background:#b4b4b4"></div>
<div class="a" style="left:578px;top:846px;width:1px;height:20px;background:#707070"></div>
<div class="a" style="left:659px;top:846px;width:1px;height:20px;background:#c8c8c8"></div>
<div class="a" style="left:917px;top:846px;width:1px;height:20px;background:#b0b0b0"></div>
<div class="a" style="left:957px;top:846px;width:1px;height:20px;background:#b0b0b0"></div>
<div class="a nw" style="left:548px;top:867px;width:30px;height:20px;background:linear-gradient(#ffffff,#f2f2f2 50%,#e4e4e4);text-align:center;line-height:20px;">9</div>
<div class="a nw" style="left:579px;top:867px;width:80px;text-align:center;line-height:20px;letter-spacing:0.3px">990101009</div>
<div class="a nw " style="left:662px;top:871px;line-height:14px">脚手架</div>
<div class="a nw" style="left:918px;top:867px;width:39px;text-align:center;line-height:22px">项</div>
<div class="a" style="left:547px;top:887px;width:411px;height:1px;background:#b4b4b4"></div>
<div class="a" style="left:578px;top:867px;width:1px;height:20px;background:#707070"></div>
<div class="a" style="left:659px;top:867px;width:1px;height:20px;background:#c8c8c8"></div>
<div class="a" style="left:917px;top:867px;width:1px;height:20px;background:#b0b0b0"></div>
<div class="a" style="left:957px;top:867px;width:1px;height:20px;background:#b0b0b0"></div>
<div class="a nw" style="left:548px;top:888px;width:30px;height:20px;background:linear-gradient(#ffffff,#f2f2f2 50%,#e4e4e4);text-align:center;line-height:20px;">10</div>
<div class="a nw" style="left:579px;top:888px;width:80px;text-align:center;line-height:20px;letter-spacing:0.3px">990101010</div>
<div class="a nw " style="left:662px;top:892px;line-height:14px">已完工程及设备保护</div>
<div class="a nw" style="left:918px;top:888px;width:39px;text-align:center;line-height:22px">项</div>
<div class="a" style="left:547px;top:908px;width:411px;height:1px;background:#b4b4b4"></div>
<div class="a" style="left:578px;top:888px;width:1px;height:20px;background:#707070"></div>
<div class="a" style="left:659px;top:888px;width:1px;height:20px;background:#c8c8c8"></div>
<div class="a" style="left:917px;top:888px;width:1px;height:20px;background:#b0b0b0"></div>
<div class="a" style="left:957px;top:888px;width:1px;height:20px;background:#b0b0b0"></div>
<div class="a nw" style="left:548px;top:909px;width:30px;height:20px;background:linear-gradient(#ffffff,#f2f2f2 50%,#e4e4e4);text-align:center;line-height:20px;">11</div>
<div class="a nw" style="left:579px;top:909px;width:80px;text-align:center;line-height:20px;letter-spacing:0.3px">990101011</div>
<div class="a nw " style="left:662px;top:913px;line-height:14px">施工排水、降水</div>
<div class="a nw" style="left:918px;top:909px;width:39px;text-align:center;line-height:22px">项</div>
<div class="a" style="left:547px;top:929px;width:411px;height:1px;background:#b4b4b4"></div>
<div class="a" style="left:578px;top:909px;width:1px;height:20px;background:#707070"></div>
<div class="a" style="left:659px;top:909px;width:1px;height:20px;background:#c8c8c8"></div>
<div class="a" style="left:917px;top:909px;width:1px;height:20px;background:#b0b0b0"></div>
<div class="a" style="left:957px;top:909px;width:1px;height:20px;background:#b0b0b0"></div>
<div class="a nw" style="left:548px;top:930px;width:30px;height:20px;background:linear-gradient(#ffffff,#f2f2f2 50%,#e4e4e4);text-align:center;line-height:20px;">12</div>
<div class="a nw" style="left:579px;top:930px;width:80px;text-align:center;line-height:20px;letter-spacing:0.3px">990102001</div>
<div class="a nw " style="left:662px;top:934px;line-height:14px">垂直运输机械</div>
<div class="a nw" style="left:918px;top:930px;width:39px;text-align:center;line-height:22px">项</div>
<div class="a" style="left:547px;top:950px;width:411px;height:1px;background:#b4b4b4"></div>
<div class="a" style="left:578px;top:930px;width:1px;height:20px;background:#707070"></div>
<div class="a" style="left:659px;top:930px;width:1px;height:20px;background:#c8c8c8"></div>
<div class="a" style="left:917px;top:930px;width:1px;height:20px;background:#b0b0b0"></div>
<div class="a" style="left:957px;top:930px;width:1px;height:20px;background:#b0b0b0"></div>
<div class="a nw" style="left:548px;top:951px;width:30px;height:20px;background:linear-gradient(#ffffff,#f2f2f2 50%,#e4e4e4);text-align:center;line-height:20px;">13</div>
<div class="a nw" style="left:579px;top:951px;width:80px;text-align:center;line-height:20px;letter-spacing:0.3px">990103001</div>
<div class="a nw " style="left:662px;top:955px;line-height:14px">垂直运输人工</div>
<div class="a nw" style="left:918px;top:951px;width:39px;text-align:center;line-height:22px">项</div>
<div class="a" style="left:547px;top:971px;width:411px;height:1px;background:#b4b4b4"></div>
<div class="a" style="left:578px;top:951px;width:1px;height:20px;background:#707070"></div>
<div class="a" style="left:659px;top:951px;width:1px;height:20px;background:#c8c8c8"></div>
<div class="a" style="left:917px;top:951px;width:1px;height:20px;background:#b0b0b0"></div>
<div class="a" style="left:957px;top:951px;width:1px;height:20px;background:#b0b0b0"></div>
</body></html>
